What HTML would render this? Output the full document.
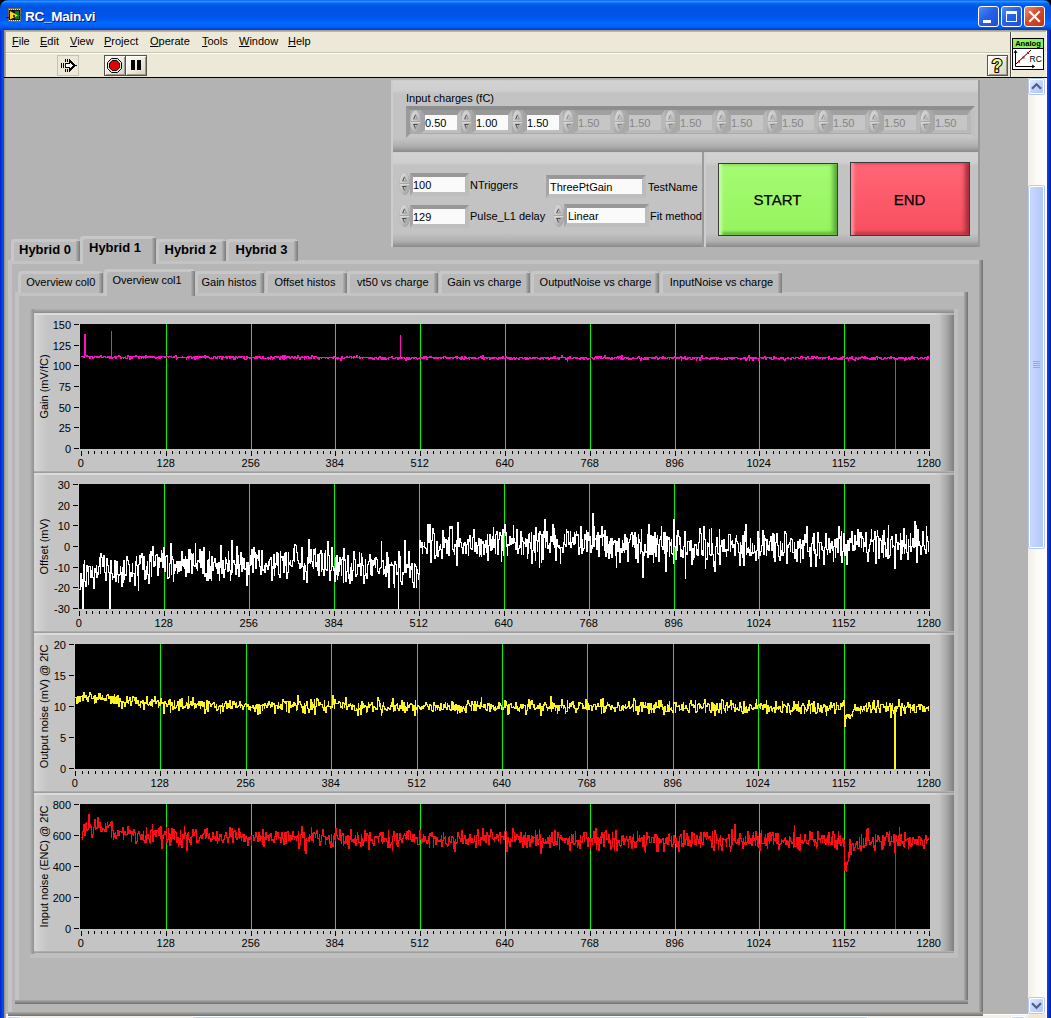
<!DOCTYPE html>
<html><head><meta charset="utf-8"><title>RC_Main.vi</title>
<style>
html,body{margin:0;padding:0;}
body{width:1051px;height:1018px;overflow:hidden;position:relative;background:#b3b3b3;font-family:"Liberation Sans",sans-serif;font-size:11px;color:#000;}
div,span{position:absolute;box-sizing:border-box;white-space:nowrap;}
svg{position:absolute;overflow:visible;}
.t{line-height:13px;height:13px;}
.titlebar{left:0;top:0;width:1051px;height:30px;border-radius:8px 8px 0 0;
 background:linear-gradient(to bottom,#0058ee 0%,#3593ff 4%,#288eff 6%,#127dff 8%,#036ffc 10%,#0262ee 14%,#0057e5 20%,#0054e3 24%,#0055eb 56%,#005bf5 66%,#026afe 76%,#0061fc 86%,#0055ea 92%,#0044cf 96%,#003dd7 100%);}
.title{left:25px;top:9px;font-size:13.5px;letter-spacing:-0.25px;font-weight:bold;color:#fff;text-shadow:1px 1px 0 #0a1883;line-height:16px;height:16px;}
.bl{left:0;top:30px;width:4px;height:988px;background:linear-gradient(to right,#0022c8 0%,#0838e0 40%,#0c4cf0 75%,#0840e0 100%);}
.br{left:1047px;top:30px;width:4px;height:988px;background:linear-gradient(to right,#0a44ea 0%,#0538dc 45%,#0020a8 80%,#001590 100%);}
.menubg{left:4px;top:30px;width:1043px;height:48px;background:#ece9d8;}
.mi{top:35px;font-size:11px;line-height:13px;height:13px;}
.mi u{text-decoration:underline;text-decoration-thickness:1px;text-underline-offset:1px;}
.cb{top:6px;width:21px;height:21px;border-radius:3px;border:1px solid #fff;}
.cluster{background:linear-gradient(to bottom,#c6c6c6 0px,#d2d2d2 1px,#cfcfcf 10px,#c3c3c3 14px,#c3c3c3 calc(100% - 14px),#b0b0b0 calc(100% - 6px),#8a8a8a 100%);border-left:2px solid #cdcdcd;border-right:2px solid #9a9a9a;}
.fld{border-style:solid;border-width:4px 4px 4px 3px;border-color:#989898 #bcbcbc #bebebe #a4a4a4;background:#fafafa;}
.fld.dis{background:#c6c6c6;border-color:#a0a0a0 #b8b8b8 #bababa #a8a8a8;}
.fld.arr{border-width:5px 4px 3px 4px;}
.fld.num span{left:0px;}
.fld span{left:1px;top:2px;line-height:13px;}
.fld.dis span{color:#858585;}
.tab{background:#bababa;border-radius:3px 4px 0 0;box-shadow:inset 3px 3px 0 #c7c7c7;overflow:hidden;}
.tab i{position:absolute;display:block;right:0;top:2px;width:4px;height:100%;background:linear-gradient(to right,#b0b0b0,#7a7a7a);}
.tab.sel{background:#b6b6b6;}
.tab.big{font-size:13px;font-weight:bold;}
.page{background:#b6b6b6;box-shadow:inset 4px 4px 0 #c3c3c3;}
.page i{position:absolute;display:block;}
.page .r{right:0;top:0;width:4px;height:100%;background:linear-gradient(to right,#aaaaaa,#707070);}
.page .b{left:0;bottom:0;height:4px;width:100%;background:linear-gradient(to bottom,#aaaaaa,#707070);}
.chart{background:linear-gradient(to right,#d6d6d6 0,#cbcbcb 8px,#c4c4c4 14px,#c4c4c4 905px,#a6a6a6 913px,#7e7e7e 920px);}
.lbl{font-size:11px;line-height:13px;height:13px;margin-top:1px;}
</style></head>
<body>
<svg width="0" height="0" style="left:0;top:0"><defs><linearGradient id="spg" x1="0" y1="0" x2="1" y2="1"><stop offset="0" stop-color="#dcdcdc"/><stop offset="0.45" stop-color="#c9c9c9"/><stop offset="1" stop-color="#989898"/></linearGradient></defs></svg>
<div style="left:0;top:0;width:1051px;height:12px;background:#000"></div>
<div class="titlebar"></div>
<div class="bl"></div><div class="br"></div>
<svg style="left:5px;top:8px" width="18" height="14" viewBox="0 0 18 14" shape-rendering="crispEdges">
<rect x="3" y="0" width="13" height="14" fill="#6e6a5a"/>
<rect x="4" y="2" width="11" height="10" fill="#101010"/>
<g fill="#e8e8e8"><rect x="4" y="0.6" width="1" height="1"/><rect x="6" y="0.6" width="1" height="1"/><rect x="8" y="0.6" width="1" height="1"/><rect x="10" y="0.6" width="1" height="1"/><rect x="12" y="0.6" width="1" height="1"/><rect x="14" y="0.6" width="1" height="1"/>
<rect x="4" y="12.4" width="1" height="1"/><rect x="6" y="12.4" width="1" height="1"/><rect x="8" y="12.4" width="1" height="1"/><rect x="10" y="12.4" width="1" height="1"/><rect x="12" y="12.4" width="1" height="1"/><rect x="14" y="12.4" width="1" height="1"/></g>
<rect x="10" y="3" width="4" height="8" fill="#0a7a14"/>
<polygon points="5,3 5,11.5 13,7.5" fill="#ffd21e" shape-rendering="auto"/>
<rect x="7.5" y="6.5" width="2" height="2" fill="#333"/>
<rect x="1" y="5" width="4" height="1" fill="#f00"/><rect x="1" y="9" width="4" height="1" fill="#00f"/><rect x="13" y="7" width="4" height="1" fill="#f00"/>
</svg>
<div class="title">RC_Main.vi</div>
<div class="cb" style="left:978px;background:linear-gradient(135deg,#4f8df6 0%,#2761e8 45%,#1e4fd8 100%)"><div style="left:4px;top:13px;width:8px;height:3px;background:#fff"></div></div>
<div class="cb" style="left:1001px;background:linear-gradient(135deg,#4f8df6 0%,#2761e8 45%,#1e4fd8 100%)"><div style="left:4px;top:4px;width:11px;height:11px;border:1px solid #fff;border-top:3px solid #fff"></div></div>
<div class="cb" style="left:1024px;background:linear-gradient(135deg,#e9907a 0%,#d5492a 45%,#c13515 100%)"><svg style="left:3px;top:3px" width="13" height="13" viewBox="0 0 13 13"><path d="M2 2 L11 11 M11 2 L2 11" stroke="#fff" stroke-width="2.2" stroke-linecap="square"/></svg></div>
<div class="menubg"></div>
<div style="left:4px;top:30px;width:1043px;height:2px;background:linear-gradient(to bottom,#9c9782,#c4c0ae)"></div>
<div style="left:4px;top:30px;width:2px;height:988px;background:linear-gradient(to right,#8f8a76,#b9b5a3)"></div>
<div style="left:1046px;top:31px;width:1px;height:987px;background:#fff"></div>
<div style="left:6px;top:52px;width:1005px;height:1px;background:#c9c6b6"></div>
<div style="left:6px;top:53px;width:1005px;height:1px;background:#fff"></div>
<div style="left:4px;top:77px;width:1043px;height:1px;background:#000"></div>
<div style="left:1010px;top:32px;width:1px;height:45px;background:#4a4a44"></div>
<div style="left:1011px;top:32px;width:1px;height:45px;background:#fff"></div>
<div class="mi" style="left:12px"><u>F</u>ile</div>
<div class="mi" style="left:40px"><u>E</u>dit</div>
<div class="mi" style="left:70px"><u>V</u>iew</div>
<div class="mi" style="left:104px"><u>P</u>roject</div>
<div class="mi" style="left:150px"><u>O</u>perate</div>
<div class="mi" style="left:202px"><u>T</u>ools</div>
<div class="mi" style="left:239px"><u>W</u>indow</div>
<div class="mi" style="left:288px"><u>H</u>elp</div>
<div style="left:57px;top:55px;width:22px;height:21px;background:#ebe8d7;border:1px solid #c6c3b2"></div>
<svg style="left:0;top:0" width="90" height="80" viewBox="0 0 90 80" shape-rendering="crispEdges"><g fill="#000"><rect x="61" y="63" width="1" height="5"/><rect x="63" y="63" width="1" height="5"/><rect x="65" y="59" width="1" height="3"/><rect x="67" y="59" width="1" height="3"/><rect x="65" y="69" width="1" height="3"/><rect x="67" y="69" width="1" height="3"/><rect x="65" y="63" width="5" height="1"/><rect x="65" y="67" width="5" height="1"/><rect x="65" y="63" width="1" height="5"/><rect x="69" y="59" width="1" height="13"/><rect x="70" y="60" width="1" height="11"/><rect x="71" y="61" width="1" height="9"/><rect x="72" y="62" width="1" height="7"/><rect x="73" y="63" width="1" height="5"/><rect x="74" y="64" width="1" height="3"/><rect x="75" y="65" width="1" height="1"/><rect x="76" y="65" width="1" height="1"/></g><g fill="#fff"><rect x="66" y="64" width="5" height="3"/><rect x="70" y="63" width="1" height="5"/><rect x="71" y="64" width="1" height="3"/><rect x="72" y="65" width="1" height="1"/></g></svg>
<div style="left:104px;top:55px;width:22px;height:21px;background:linear-gradient(135deg,#fffef6 0%,#efecdc 50%,#d4d1bf 100%);border:1px solid;border-color:#55534a #55534a #55534a #55534a;box-shadow:inset 1px 1px 0 #fff,inset -1px -1px 0 #9d9a89"></div>
<div style="left:125px;top:55px;width:22px;height:21px;background:linear-gradient(135deg,#fffef6 0%,#efecdc 50%,#d4d1bf 100%);border:1px solid;border-color:#55534a #55534a #55534a #55534a;box-shadow:inset 1px 1px 0 #fff,inset -1px -1px 0 #9d9a89"></div>
<svg style="left:107px;top:58px" width="15" height="15" viewBox="0 0 15 15">
<polygon points="4.5,0.5 10.5,0.5 14.5,4.5 14.5,10.5 10.5,14.5 4.5,14.5 0.5,10.5 0.5,4.5" fill="#e4e4e4" stroke="#000" stroke-width="1"/>
<polygon points="5.3,2.5 9.7,2.5 12.5,5.3 12.5,9.7 9.7,12.5 5.3,12.5 2.5,9.7 2.5,5.3" fill="#e20000" stroke="#000" stroke-width="1"/>
</svg>
<div style="left:131px;top:60px;width:4px;height:10px;background:#000"></div><div style="left:137px;top:60px;width:4px;height:10px;background:#000"></div>
<div style="left:987px;top:55px;width:21px;height:21px;background:linear-gradient(135deg,#fffef6 0%,#efecdc 50%,#d4d1bf 100%);border:1px solid #55534a;box-shadow:inset 1px 1px 0 #fff,inset -1px -1px 0 #9d9a89"></div>
<svg style="left:987px;top:55px" width="21" height="21" viewBox="0 0 21 21"><text x="10.2" y="16.8" text-anchor="middle" font-family="Liberation Sans, sans-serif" font-size="17.5" font-weight="bold" fill="#f7f784" stroke="#000" stroke-width="2.2" stroke-linejoin="round" paint-order="stroke fill">?</text></svg>
<svg style="left:1012px;top:38px" width="32" height="32" viewBox="0 0 32 32">
<rect x="0.5" y="0.5" width="31" height="31" fill="#fff" stroke="#000"/>
<rect x="1" y="1" width="30" height="9" fill="#8cf05a"/>
<rect x="0" y="10" width="32" height="1" fill="#000"/>
<text x="16" y="8.2" font-family="Liberation Sans, sans-serif" font-size="7.6" font-weight="bold" text-anchor="middle" fill="#000">Analog</text>
<path d="M3.5 13 V28.5 H22" stroke="#000" fill="none"/>
<path d="M2 15 L3.5 12.5 L5 15 M20 27 L22.5 28.5 L20 30" stroke="#000" fill="none"/>
<path d="M4 26 L19 12" stroke="#000"/>
<rect x="6" y="22.5" width="2" height="2" fill="#f00"/><rect x="10.5" y="18.5" width="2" height="2" fill="#f00"/><rect x="15" y="14" width="2" height="2" fill="#f00"/>
<text x="17.5" y="24" font-family="Liberation Sans, sans-serif" font-size="8.5" fill="#000">RC</text>
</svg>
<div style="left:1028px;top:78px;width:18px;height:936px;background:linear-gradient(to right,#f1efe8 0,#fbfaf6 50%,#fefefb 100%)"></div>
<div style="left:1029px;top:79px;width:15px;height:15px;border-radius:2px;background:linear-gradient(135deg,#e1eafe 0%,#c3d3fd 50%,#aec4fb 100%);border:1px solid #fff;box-shadow:0 0 0 1px #b4c8f6"></div>
<svg style="left:1032px;top:83px" width="9" height="7" viewBox="0 0 8 6"><polyline points="0,5 4,1 8,5" fill="none" stroke="#4d6185" stroke-width="2"/></svg>
<div style="left:1029px;top:998px;width:15px;height:15px;border-radius:2px;background:linear-gradient(135deg,#e1eafe 0%,#c3d3fd 50%,#aec4fb 100%);border:1px solid #fff;box-shadow:0 0 0 1px #b4c8f6"></div>
<svg style="left:1032px;top:1002px" width="9" height="7" viewBox="0 0 8 6"><polyline points="0,1 4,5 8,1" fill="none" stroke="#4d6185" stroke-width="2"/></svg>
<div style="left:1029px;top:186px;width:15px;height:362px;border-radius:2px;background:linear-gradient(to right,#c9d7fd 0%,#c1d2fc 40%,#b3c6fa 100%);border:1px solid #fff;box-shadow:0 0 0 1px #b4c8f6"></div>
<div style="left:1033px;top:361px;width:7px;height:1px;background:#8fa8ee"></div>
<div style="left:1033px;top:363px;width:7px;height:1px;background:#8fa8ee"></div>
<div style="left:1033px;top:365px;width:7px;height:1px;background:#8fa8ee"></div>
<div style="left:1033px;top:367px;width:7px;height:1px;background:#8fa8ee"></div>
<div style="left:6px;top:1014px;width:1022px;height:4px;background:#f3f1ec;border-top:1px solid #fefefe"></div>
<div style="left:7px;top:1016px;width:14px;height:4px;background:#c3d3fd;border:1px solid #fff;border-radius:2px 2px 0 0"></div>
<div style="left:1011px;top:1016px;width:14px;height:4px;background:#c3d3fd;border:1px solid #fff;border-radius:2px 2px 0 0"></div>
<div style="left:192px;top:1016px;width:676px;height:4px;background:#c1d2fc;border:1px solid #fff;border-radius:2px 2px 0 0"></div>
<div style="left:1028px;top:1014px;width:18px;height:4px;background:#ece9d8"></div>
<div class="cluster" style="left:391px;top:80px;width:589px;height:72px"></div>
<div class="lbl" style="left:406px;top:91px">Input charges (fC)</div>
<div style="left:406px;top:106px;width:569px;height:32px;border-style:solid;border-width:4px;border-color:#8e8e8e #c0c0c0 #c6c6c6 #9a9a9a;background:#ababab"></div>
<svg style="left:410px;top:110px" width="11" height="23" viewBox="0 0 11 23">
<ellipse cx="5.9" cy="11.9" rx="5.2" ry="11.2" fill="#9a9a9a"/><ellipse cx="5.4" cy="11.4" rx="5.1" ry="11.1" fill="url(#spg)" stroke="#b4b4b4" stroke-width="0.6"/>
<rect x="0.8" y="11" width="9.4" height="1" fill="#a6a6a6"/><rect x="0.8" y="12" width="9.4" height="1" fill="#d8d8d8"/>
<g><path d="M3.6 9.2 L5.6 4.8" stroke="#3a3a3a" stroke-width="1" fill="none"/><path d="M5.6 4.8 L7.4 9 H3.6" stroke="#8c8c8c" stroke-width="0.8" fill="none"/>
<path d="M3.4 14.5 H7.6" stroke="#4a4a4a" stroke-width="1" fill="none"/><path d="M3.8 14.5 L5.6 18.6" stroke="#4a4a4a" stroke-width="1" fill="none"/><path d="M7.4 14.5 L5.6 18.6" stroke="#9a9a9a" stroke-width="0.8" fill="none"/></g>
</svg>
<div class="fld arr num" style="left:421px;top:110px;width:40px;height:23px"><span>0.50</span></div>
<svg style="left:461px;top:110px" width="11" height="23" viewBox="0 0 11 23">
<ellipse cx="5.9" cy="11.9" rx="5.2" ry="11.2" fill="#9a9a9a"/><ellipse cx="5.4" cy="11.4" rx="5.1" ry="11.1" fill="url(#spg)" stroke="#b4b4b4" stroke-width="0.6"/>
<rect x="0.8" y="11" width="9.4" height="1" fill="#a6a6a6"/><rect x="0.8" y="12" width="9.4" height="1" fill="#d8d8d8"/>
<g><path d="M3.6 9.2 L5.6 4.8" stroke="#3a3a3a" stroke-width="1" fill="none"/><path d="M5.6 4.8 L7.4 9 H3.6" stroke="#8c8c8c" stroke-width="0.8" fill="none"/>
<path d="M3.4 14.5 H7.6" stroke="#4a4a4a" stroke-width="1" fill="none"/><path d="M3.8 14.5 L5.6 18.6" stroke="#4a4a4a" stroke-width="1" fill="none"/><path d="M7.4 14.5 L5.6 18.6" stroke="#9a9a9a" stroke-width="0.8" fill="none"/></g>
</svg>
<div class="fld arr num" style="left:472px;top:110px;width:40px;height:23px"><span>1.00</span></div>
<svg style="left:512px;top:110px" width="11" height="23" viewBox="0 0 11 23">
<ellipse cx="5.9" cy="11.9" rx="5.2" ry="11.2" fill="#9a9a9a"/><ellipse cx="5.4" cy="11.4" rx="5.1" ry="11.1" fill="url(#spg)" stroke="#b4b4b4" stroke-width="0.6"/>
<rect x="0.8" y="11" width="9.4" height="1" fill="#a6a6a6"/><rect x="0.8" y="12" width="9.4" height="1" fill="#d8d8d8"/>
<g><path d="M3.6 9.2 L5.6 4.8" stroke="#3a3a3a" stroke-width="1" fill="none"/><path d="M5.6 4.8 L7.4 9 H3.6" stroke="#8c8c8c" stroke-width="0.8" fill="none"/>
<path d="M3.4 14.5 H7.6" stroke="#4a4a4a" stroke-width="1" fill="none"/><path d="M3.8 14.5 L5.6 18.6" stroke="#4a4a4a" stroke-width="1" fill="none"/><path d="M7.4 14.5 L5.6 18.6" stroke="#9a9a9a" stroke-width="0.8" fill="none"/></g>
</svg>
<div class="fld arr num" style="left:523px;top:110px;width:40px;height:23px"><span>1.50</span></div>
<svg style="left:563px;top:110px" width="11" height="23" viewBox="0 0 11 23">
<ellipse cx="5.9" cy="11.9" rx="5.2" ry="11.2" fill="#9a9a9a"/><ellipse cx="5.4" cy="11.4" rx="5.1" ry="11.1" fill="url(#spg)" stroke="#b4b4b4" stroke-width="0.6"/>
<rect x="0.8" y="11" width="9.4" height="1" fill="#a6a6a6"/><rect x="0.8" y="12" width="9.4" height="1" fill="#d8d8d8"/>
<g opacity="0.5"><path d="M3.6 9.2 L5.6 4.8" stroke="#3a3a3a" stroke-width="1" fill="none"/><path d="M5.6 4.8 L7.4 9 H3.6" stroke="#8c8c8c" stroke-width="0.8" fill="none"/>
<path d="M3.4 14.5 H7.6" stroke="#4a4a4a" stroke-width="1" fill="none"/><path d="M3.8 14.5 L5.6 18.6" stroke="#4a4a4a" stroke-width="1" fill="none"/><path d="M7.4 14.5 L5.6 18.6" stroke="#9a9a9a" stroke-width="0.8" fill="none"/></g>
</svg>
<div class="fld dis arr num" style="left:574px;top:110px;width:40px;height:23px"><span>1.50</span></div>
<svg style="left:614px;top:110px" width="11" height="23" viewBox="0 0 11 23">
<ellipse cx="5.9" cy="11.9" rx="5.2" ry="11.2" fill="#9a9a9a"/><ellipse cx="5.4" cy="11.4" rx="5.1" ry="11.1" fill="url(#spg)" stroke="#b4b4b4" stroke-width="0.6"/>
<rect x="0.8" y="11" width="9.4" height="1" fill="#a6a6a6"/><rect x="0.8" y="12" width="9.4" height="1" fill="#d8d8d8"/>
<g opacity="0.5"><path d="M3.6 9.2 L5.6 4.8" stroke="#3a3a3a" stroke-width="1" fill="none"/><path d="M5.6 4.8 L7.4 9 H3.6" stroke="#8c8c8c" stroke-width="0.8" fill="none"/>
<path d="M3.4 14.5 H7.6" stroke="#4a4a4a" stroke-width="1" fill="none"/><path d="M3.8 14.5 L5.6 18.6" stroke="#4a4a4a" stroke-width="1" fill="none"/><path d="M7.4 14.5 L5.6 18.6" stroke="#9a9a9a" stroke-width="0.8" fill="none"/></g>
</svg>
<div class="fld dis arr num" style="left:625px;top:110px;width:40px;height:23px"><span>1.50</span></div>
<svg style="left:665px;top:110px" width="11" height="23" viewBox="0 0 11 23">
<ellipse cx="5.9" cy="11.9" rx="5.2" ry="11.2" fill="#9a9a9a"/><ellipse cx="5.4" cy="11.4" rx="5.1" ry="11.1" fill="url(#spg)" stroke="#b4b4b4" stroke-width="0.6"/>
<rect x="0.8" y="11" width="9.4" height="1" fill="#a6a6a6"/><rect x="0.8" y="12" width="9.4" height="1" fill="#d8d8d8"/>
<g opacity="0.5"><path d="M3.6 9.2 L5.6 4.8" stroke="#3a3a3a" stroke-width="1" fill="none"/><path d="M5.6 4.8 L7.4 9 H3.6" stroke="#8c8c8c" stroke-width="0.8" fill="none"/>
<path d="M3.4 14.5 H7.6" stroke="#4a4a4a" stroke-width="1" fill="none"/><path d="M3.8 14.5 L5.6 18.6" stroke="#4a4a4a" stroke-width="1" fill="none"/><path d="M7.4 14.5 L5.6 18.6" stroke="#9a9a9a" stroke-width="0.8" fill="none"/></g>
</svg>
<div class="fld dis arr num" style="left:676px;top:110px;width:40px;height:23px"><span>1.50</span></div>
<svg style="left:716px;top:110px" width="11" height="23" viewBox="0 0 11 23">
<ellipse cx="5.9" cy="11.9" rx="5.2" ry="11.2" fill="#9a9a9a"/><ellipse cx="5.4" cy="11.4" rx="5.1" ry="11.1" fill="url(#spg)" stroke="#b4b4b4" stroke-width="0.6"/>
<rect x="0.8" y="11" width="9.4" height="1" fill="#a6a6a6"/><rect x="0.8" y="12" width="9.4" height="1" fill="#d8d8d8"/>
<g opacity="0.5"><path d="M3.6 9.2 L5.6 4.8" stroke="#3a3a3a" stroke-width="1" fill="none"/><path d="M5.6 4.8 L7.4 9 H3.6" stroke="#8c8c8c" stroke-width="0.8" fill="none"/>
<path d="M3.4 14.5 H7.6" stroke="#4a4a4a" stroke-width="1" fill="none"/><path d="M3.8 14.5 L5.6 18.6" stroke="#4a4a4a" stroke-width="1" fill="none"/><path d="M7.4 14.5 L5.6 18.6" stroke="#9a9a9a" stroke-width="0.8" fill="none"/></g>
</svg>
<div class="fld dis arr num" style="left:727px;top:110px;width:40px;height:23px"><span>1.50</span></div>
<svg style="left:767px;top:110px" width="11" height="23" viewBox="0 0 11 23">
<ellipse cx="5.9" cy="11.9" rx="5.2" ry="11.2" fill="#9a9a9a"/><ellipse cx="5.4" cy="11.4" rx="5.1" ry="11.1" fill="url(#spg)" stroke="#b4b4b4" stroke-width="0.6"/>
<rect x="0.8" y="11" width="9.4" height="1" fill="#a6a6a6"/><rect x="0.8" y="12" width="9.4" height="1" fill="#d8d8d8"/>
<g opacity="0.5"><path d="M3.6 9.2 L5.6 4.8" stroke="#3a3a3a" stroke-width="1" fill="none"/><path d="M5.6 4.8 L7.4 9 H3.6" stroke="#8c8c8c" stroke-width="0.8" fill="none"/>
<path d="M3.4 14.5 H7.6" stroke="#4a4a4a" stroke-width="1" fill="none"/><path d="M3.8 14.5 L5.6 18.6" stroke="#4a4a4a" stroke-width="1" fill="none"/><path d="M7.4 14.5 L5.6 18.6" stroke="#9a9a9a" stroke-width="0.8" fill="none"/></g>
</svg>
<div class="fld dis arr num" style="left:778px;top:110px;width:40px;height:23px"><span>1.50</span></div>
<svg style="left:818px;top:110px" width="11" height="23" viewBox="0 0 11 23">
<ellipse cx="5.9" cy="11.9" rx="5.2" ry="11.2" fill="#9a9a9a"/><ellipse cx="5.4" cy="11.4" rx="5.1" ry="11.1" fill="url(#spg)" stroke="#b4b4b4" stroke-width="0.6"/>
<rect x="0.8" y="11" width="9.4" height="1" fill="#a6a6a6"/><rect x="0.8" y="12" width="9.4" height="1" fill="#d8d8d8"/>
<g opacity="0.5"><path d="M3.6 9.2 L5.6 4.8" stroke="#3a3a3a" stroke-width="1" fill="none"/><path d="M5.6 4.8 L7.4 9 H3.6" stroke="#8c8c8c" stroke-width="0.8" fill="none"/>
<path d="M3.4 14.5 H7.6" stroke="#4a4a4a" stroke-width="1" fill="none"/><path d="M3.8 14.5 L5.6 18.6" stroke="#4a4a4a" stroke-width="1" fill="none"/><path d="M7.4 14.5 L5.6 18.6" stroke="#9a9a9a" stroke-width="0.8" fill="none"/></g>
</svg>
<div class="fld dis arr num" style="left:829px;top:110px;width:40px;height:23px"><span>1.50</span></div>
<svg style="left:869px;top:110px" width="11" height="23" viewBox="0 0 11 23">
<ellipse cx="5.9" cy="11.9" rx="5.2" ry="11.2" fill="#9a9a9a"/><ellipse cx="5.4" cy="11.4" rx="5.1" ry="11.1" fill="url(#spg)" stroke="#b4b4b4" stroke-width="0.6"/>
<rect x="0.8" y="11" width="9.4" height="1" fill="#a6a6a6"/><rect x="0.8" y="12" width="9.4" height="1" fill="#d8d8d8"/>
<g opacity="0.5"><path d="M3.6 9.2 L5.6 4.8" stroke="#3a3a3a" stroke-width="1" fill="none"/><path d="M5.6 4.8 L7.4 9 H3.6" stroke="#8c8c8c" stroke-width="0.8" fill="none"/>
<path d="M3.4 14.5 H7.6" stroke="#4a4a4a" stroke-width="1" fill="none"/><path d="M3.8 14.5 L5.6 18.6" stroke="#4a4a4a" stroke-width="1" fill="none"/><path d="M7.4 14.5 L5.6 18.6" stroke="#9a9a9a" stroke-width="0.8" fill="none"/></g>
</svg>
<div class="fld dis arr num" style="left:880px;top:110px;width:40px;height:23px"><span>1.50</span></div>
<svg style="left:920px;top:110px" width="11" height="23" viewBox="0 0 11 23">
<ellipse cx="5.9" cy="11.9" rx="5.2" ry="11.2" fill="#9a9a9a"/><ellipse cx="5.4" cy="11.4" rx="5.1" ry="11.1" fill="url(#spg)" stroke="#b4b4b4" stroke-width="0.6"/>
<rect x="0.8" y="11" width="9.4" height="1" fill="#a6a6a6"/><rect x="0.8" y="12" width="9.4" height="1" fill="#d8d8d8"/>
<g opacity="0.5"><path d="M3.6 9.2 L5.6 4.8" stroke="#3a3a3a" stroke-width="1" fill="none"/><path d="M5.6 4.8 L7.4 9 H3.6" stroke="#8c8c8c" stroke-width="0.8" fill="none"/>
<path d="M3.4 14.5 H7.6" stroke="#4a4a4a" stroke-width="1" fill="none"/><path d="M3.8 14.5 L5.6 18.6" stroke="#4a4a4a" stroke-width="1" fill="none"/><path d="M7.4 14.5 L5.6 18.6" stroke="#9a9a9a" stroke-width="0.8" fill="none"/></g>
</svg>
<div class="fld dis arr num" style="left:931px;top:110px;width:40px;height:23px"><span>1.50</span></div>
<div class="cluster" style="left:391px;top:152px;width:313px;height:95px"></div>
<svg style="left:399px;top:172px" width="11" height="23" viewBox="0 0 11 23">
<ellipse cx="5.9" cy="11.9" rx="5.2" ry="11.2" fill="#9a9a9a"/><ellipse cx="5.4" cy="11.4" rx="5.1" ry="11.1" fill="url(#spg)" stroke="#b4b4b4" stroke-width="0.6"/>
<rect x="0.8" y="11" width="9.4" height="1" fill="#a6a6a6"/><rect x="0.8" y="12" width="9.4" height="1" fill="#d8d8d8"/>
<g><path d="M3.6 9.2 L5.6 4.8" stroke="#3a3a3a" stroke-width="1" fill="none"/><path d="M5.6 4.8 L7.4 9 H3.6" stroke="#8c8c8c" stroke-width="0.8" fill="none"/>
<path d="M3.4 14.5 H7.6" stroke="#4a4a4a" stroke-width="1" fill="none"/><path d="M3.8 14.5 L5.6 18.6" stroke="#4a4a4a" stroke-width="1" fill="none"/><path d="M7.4 14.5 L5.6 18.6" stroke="#9a9a9a" stroke-width="0.8" fill="none"/></g>
</svg>
<div class="fld num" style="left:410px;top:173px;width:59px;height:23px"><span>100</span></div>
<div class="lbl" style="left:470px;top:178px">NTriggers</div>
<svg style="left:399px;top:204px" width="11" height="23" viewBox="0 0 11 23">
<ellipse cx="5.9" cy="11.9" rx="5.2" ry="11.2" fill="#9a9a9a"/><ellipse cx="5.4" cy="11.4" rx="5.1" ry="11.1" fill="url(#spg)" stroke="#b4b4b4" stroke-width="0.6"/>
<rect x="0.8" y="11" width="9.4" height="1" fill="#a6a6a6"/><rect x="0.8" y="12" width="9.4" height="1" fill="#d8d8d8"/>
<g><path d="M3.6 9.2 L5.6 4.8" stroke="#3a3a3a" stroke-width="1" fill="none"/><path d="M5.6 4.8 L7.4 9 H3.6" stroke="#8c8c8c" stroke-width="0.8" fill="none"/>
<path d="M3.4 14.5 H7.6" stroke="#4a4a4a" stroke-width="1" fill="none"/><path d="M3.8 14.5 L5.6 18.6" stroke="#4a4a4a" stroke-width="1" fill="none"/><path d="M7.4 14.5 L5.6 18.6" stroke="#9a9a9a" stroke-width="0.8" fill="none"/></g>
</svg>
<div class="fld num" style="left:410px;top:205px;width:59px;height:23px"><span>129</span></div>
<div class="lbl" style="left:470px;top:209px">Pulse_L1 delay</div>
<div class="fld" style="left:546px;top:175px;width:100px;height:23px"><span>ThreePtGain</span></div>
<div class="lbl" style="left:648px;top:180px">TestName</div>
<svg style="left:553px;top:204px" width="11" height="23" viewBox="0 0 11 23">
<ellipse cx="5.9" cy="11.9" rx="5.2" ry="11.2" fill="#9a9a9a"/><ellipse cx="5.4" cy="11.4" rx="5.1" ry="11.1" fill="url(#spg)" stroke="#b4b4b4" stroke-width="0.6"/>
<rect x="0.8" y="11" width="9.4" height="1" fill="#a6a6a6"/><rect x="0.8" y="12" width="9.4" height="1" fill="#d8d8d8"/>
<g><path d="M3.6 9.2 L5.6 4.8" stroke="#3a3a3a" stroke-width="1" fill="none"/><path d="M5.6 4.8 L7.4 9 H3.6" stroke="#8c8c8c" stroke-width="0.8" fill="none"/>
<path d="M3.4 14.5 H7.6" stroke="#4a4a4a" stroke-width="1" fill="none"/><path d="M3.8 14.5 L5.6 18.6" stroke="#4a4a4a" stroke-width="1" fill="none"/><path d="M7.4 14.5 L5.6 18.6" stroke="#9a9a9a" stroke-width="0.8" fill="none"/></g>
</svg>
<div class="fld" style="left:564px;top:204px;width:85px;height:23px"><span>Linear</span></div>
<div class="lbl" style="left:650px;top:209px">Fit method</div>
<div class="cluster" style="left:704px;top:152px;width:276px;height:95px"></div>
<div style="left:718px;top:163px;width:120px;height:73px;background:linear-gradient(to bottom,#a4fb72,#96f45e);border:1px solid #3a3a3a;box-shadow:inset 4px 0 3px -1px #c2ffa2,inset -5px 0 4px -1px #5aa83a,inset 0 -4px 3px -1px #64b842,inset 0 2px 2px -1px #92e464;font-size:15px;line-height:71px;text-align:center"><span style="position:static;margin-left:-1px;-webkit-text-stroke:0.25px #000">START</span></div>
<div style="left:850px;top:162px;width:120px;height:74px;background:linear-gradient(to bottom,#ff6676,#f84e5e);border:1px solid #3a3a3a;box-shadow:inset 4px 0 3px -1px #ff8e9a,inset -5px 0 4px -1px #a62e3e,inset 0 -4px 3px -1px #be3a48,inset 0 2px 2px -1px #e45262;font-size:15px;line-height:74px;text-align:center"><span style="position:static;margin-left:-1px;-webkit-text-stroke:0.25px #000">END</span></div>
<div class="page" style="left:8px;top:260px;width:975px;height:756px"><i class="r"></i><i class="b"></i></div>
<div class="tab big" style="left:11px;top:239px;width:69px;height:22px"><i class="r"></i><span style="left:8px;top:3.0px;line-height:16px">Hybrid 0</span></div>
<div class="tab big" style="left:156px;top:239px;width:70px;height:22px"><i class="r"></i><span style="left:8.5px;top:3.0px;line-height:16px">Hybrid 2</span></div>
<div class="tab big" style="left:226px;top:239px;width:72px;height:22px"><i class="r"></i><span style="left:9.5px;top:3.0px;line-height:16px">Hybrid 3</span></div>
<div class="tab big sel" style="left:80px;top:236px;width:76px;height:28px"><i class="r"></i><span style="left:9px;top:3.8px;line-height:16px">Hybrid 1</span></div>
<div class="page" style="left:15px;top:292px;width:953px;height:712px"><i class="r"></i><i class="b"></i></div>
<div class="tab" style="left:18px;top:271px;width:85px;height:22px"><i class="r"></i><span style="left:8.3px;top:4.7px;line-height:13px">Overview col0</span></div>
<div class="tab" style="left:195px;top:271px;width:69px;height:22px"><i class="r"></i><span style="left:6.5px;top:4.7px;line-height:13px">Gain histos</span></div>
<div class="tab" style="left:265px;top:271px;width:82px;height:22px"><i class="r"></i><span style="left:9.5px;top:4.7px;line-height:13px">Offset histos</span></div>
<div class="tab" style="left:347px;top:271px;width:91px;height:22px"><i class="r"></i><span style="left:10px;top:4.7px;line-height:13px">vt50 vs charge</span></div>
<div class="tab" style="left:439px;top:271px;width:91px;height:22px"><i class="r"></i><span style="left:8.300000000000011px;top:4.7px;line-height:13px">Gain vs charge</span></div>
<div class="tab" style="left:531px;top:271px;width:128px;height:22px"><i class="r"></i><span style="left:8.600000000000023px;top:4.7px;line-height:13px">OutputNoise vs charge</span></div>
<div class="tab" style="left:660px;top:271px;width:122px;height:22px"><i class="r"></i><span style="left:9.799999999999955px;top:4.7px;line-height:13px">InputNoise vs charge</span></div>
<div class="tab sel" style="left:104px;top:269px;width:91px;height:27px"><i class="r"></i><span style="left:8.5px;top:4.9px;line-height:13px">Overview col1</span></div>
<div style="left:30px;top:309px;width:928px;height:649px;background:#bfbfbf"></div>
<div style="left:30px;top:309px;width:924px;height:4px;background:linear-gradient(to bottom,#b2b2b2,#8a8a8a)"></div>
<div style="left:30px;top:309px;width:4px;height:645px;background:linear-gradient(to right,#b2b2b2,#909090)"></div>
<div class="chart" style="left:34px;top:313px;width:920px;height:160px"></div>
<div style="left:34px;top:313px;width:920px;height:2px;background:linear-gradient(to right,#dcdcdc 0,#d8d8d8 900px,#b0b0b0 920px)"></div>
<div style="left:34px;top:471px;width:920px;height:2px;background:linear-gradient(to bottom,#b4b4b4,#969696)"></div>
<svg style="left:0;top:0" width="1051" height="1018" viewBox="0 0 1051 1018" shape-rendering="crispEdges" font-family="Liberation Sans, sans-serif" font-size="11">
<rect x="80" y="324" width="850" height="125" fill="#000"/>
<path d="M166.5 324V449M251.5 324V449M335.5 324V449M420.5 324V449M505.5 324V449M590.5 324V449M675.5 324V449M759.5 324V449M844.5 324V449" stroke="#08f408" stroke-width="1" fill="none"/>
<path d="M81.5 356.5H82.5V356.5H82.5V356.5H83.5V357.5H84.5V357.5H84.5V334.5H85.5V355.5H86.5V356.5H86.5V355.5H87.5V356.5H88.5V356.5H88.5V356.5H89.5V358.5H90.5V356.5H90.5V356.5H91.5V356.5H92.5V358.5H92.5V358.5H93.5V357.5H93.5V357.5H94.5V356.5H95.5V356.5H95.5V356.5H96.5V357.5H97.5V356.5H97.5V356.5H98.5V357.5H99.5V355.5H99.5V356.5H100.5V355.5H101.5V357.5H101.5V357.5H102.5V357.5H103.5V356.5H103.5V356.5H104.5V356.5H105.5V357.5H105.5V357.5H106.5V357.5H107.5V355.5H107.5V357.5H108.5V356.5H109.5V356.5H109.5V358.5H110.5V356.5H111.5V330.5H111.5V358.5H112.5V357.5H113.5V357.5H113.5V357.5H114.5V356.5H115.5V357.5H115.5V358.5H116.5V356.5H117.5V356.5H117.5V356.5H118.5V355.5H119.5V356.5H119.5V356.5H120.5V358.5H121.5V356.5H121.5V357.5H122.5V357.5H123.5V358.5H123.5V357.5H124.5V357.5H125.5V355.5H125.5V358.5H126.5V358.5H127.5V356.5H127.5V355.5H128.5V356.5H129.5V358.5H129.5V359.5H130.5V356.5H131.5V357.5H131.5V358.5H132.5V356.5H133.5V356.5H133.5V356.5H134.5V356.5H135.5V356.5H135.5V355.5H136.5V356.5H137.5V356.5H137.5V356.5H138.5V358.5H139.5V355.5H139.5V356.5H140.5V356.5H141.5V358.5H141.5V357.5H142.5V356.5H143.5V358.5H143.5V357.5H144.5V356.5H145.5V358.5H145.5V355.5H146.5V356.5H146.5V357.5H147.5V356.5H148.5V356.5H148.5V357.5H149.5V356.5H150.5V357.5H150.5V357.5H151.5V356.5H152.5V357.5H152.5V357.5H153.5V356.5H154.5V355.5H154.5V357.5H155.5V358.5H156.5V357.5H156.5V357.5H157.5V357.5H158.5V355.5H158.5V358.5H159.5V356.5H160.5V358.5H160.5V357.5H161.5V356.5H162.5V356.5H162.5V356.5H163.5V356.5H164.5V357.5H164.5V357.5H165.5V356.5H166.5V357.5H166.5V356.5H167.5V356.5H168.5V357.5H168.5V356.5H169.5V356.5H170.5V355.5H170.5V356.5H171.5V357.5H172.5V357.5H172.5V357.5H173.5V356.5H174.5V357.5H174.5V356.5H175.5V355.5H176.5V359.5H176.5V358.5H177.5V357.5H178.5V356.5H178.5V357.5H179.5V357.5H180.5V356.5H180.5V357.5H181.5V357.5H182.5V355.5H182.5V357.5H183.5V357.5H184.5V357.5H184.5V357.5H185.5V357.5H186.5V359.5H186.5V357.5H187.5V356.5H188.5V358.5H188.5V357.5H189.5V356.5H190.5V356.5H190.5V356.5H191.5V358.5H192.5V357.5H192.5V357.5H193.5V356.5H194.5V356.5H194.5V359.5H195.5V356.5H196.5V358.5H196.5V356.5H197.5V358.5H198.5V357.5H198.5V356.5H199.5V357.5H200.5V357.5H200.5V356.5H201.5V357.5H201.5V357.5H202.5V356.5H203.5V356.5H203.5V357.5H204.5V355.5H205.5V358.5H205.5V356.5H206.5V357.5H207.5V357.5H207.5V356.5H208.5V357.5H209.5V356.5H209.5V358.5H210.5V358.5H211.5V356.5H211.5V358.5H212.5V358.5H213.5V358.5H213.5V356.5H214.5V356.5H215.5V356.5H215.5V358.5H216.5V357.5H217.5V358.5H217.5V356.5H218.5V356.5H219.5V358.5H219.5V356.5H220.5V356.5H221.5V357.5H221.5V359.5H222.5V356.5H223.5V357.5H223.5V357.5H224.5V357.5H225.5V357.5H225.5V356.5H226.5V358.5H227.5V356.5H227.5V356.5H228.5V356.5H229.5V357.5H229.5V358.5H230.5V356.5H231.5V357.5H231.5V357.5H232.5V356.5H233.5V357.5H233.5V359.5H234.5V357.5H235.5V359.5H235.5V356.5H236.5V357.5H237.5V358.5H237.5V357.5H238.5V356.5H239.5V357.5H239.5V356.5H240.5V357.5H241.5V356.5H241.5V356.5H242.5V356.5H243.5V358.5H243.5V356.5H244.5V359.5H245.5V358.5H245.5V359.5H246.5V356.5H247.5V358.5H247.5V357.5H248.5V357.5H249.5V357.5H249.5V358.5H250.5V357.5H251.5V355.5H251.5V357.5H252.5V357.5H253.5V356.5H253.5V357.5H254.5V358.5H254.5V358.5H255.5V356.5H256.5V358.5H256.5V358.5H257.5V356.5H258.5V356.5H258.5V357.5H259.5V356.5H260.5V357.5H260.5V358.5H261.5V358.5H262.5V358.5H262.5V356.5H263.5V358.5H264.5V358.5H264.5V358.5H265.5V358.5H266.5V357.5H266.5V358.5H267.5V357.5H268.5V359.5H268.5V357.5H269.5V358.5H270.5V359.5H270.5V356.5H271.5V357.5H272.5V359.5H272.5V358.5H273.5V357.5H274.5V358.5H274.5V356.5H275.5V356.5H276.5V357.5H276.5V357.5H277.5V356.5H278.5V357.5H278.5V357.5H279.5V359.5H280.5V356.5H280.5V356.5H281.5V357.5H282.5V358.5H282.5V355.5H283.5V359.5H284.5V357.5H284.5V355.5H285.5V358.5H286.5V357.5H286.5V356.5H287.5V357.5H288.5V357.5H288.5V356.5H289.5V358.5H290.5V357.5H290.5V357.5H291.5V356.5H292.5V357.5H292.5V357.5H293.5V358.5H294.5V357.5H294.5V356.5H295.5V357.5H296.5V358.5H296.5V358.5H297.5V355.5H298.5V356.5H298.5V357.5H299.5V359.5H300.5V357.5H300.5V357.5H301.5V356.5H302.5V357.5H302.5V357.5H303.5V357.5H304.5V359.5H304.5V356.5H305.5V357.5H306.5V358.5H306.5V356.5H307.5V356.5H308.5V358.5H308.5V358.5H309.5V357.5H309.5V357.5H310.5V358.5H311.5V358.5H311.5V355.5H312.5V356.5H313.5V358.5H313.5V358.5H314.5V356.5H315.5V356.5H315.5V356.5H316.5V357.5H317.5V358.5H317.5V357.5H318.5V359.5H319.5V358.5H319.5V357.5H320.5V357.5H321.5V358.5H321.5V357.5H322.5V357.5H323.5V357.5H323.5V357.5H324.5V357.5H325.5V358.5H325.5V357.5H326.5V357.5H327.5V358.5H327.5V358.5H328.5V357.5H329.5V357.5H329.5V357.5H330.5V357.5H331.5V357.5H331.5V357.5H332.5V358.5H333.5V357.5H333.5V356.5H334.5V357.5H335.5V357.5H335.5V357.5H336.5V358.5H337.5V359.5H337.5V357.5H338.5V358.5H339.5V357.5H339.5V358.5H340.5V360.5H341.5V358.5H341.5V356.5H342.5V358.5H343.5V358.5H343.5V358.5H344.5V357.5H345.5V357.5H345.5V357.5H346.5V356.5H347.5V357.5H347.5V357.5H348.5V357.5H349.5V356.5H349.5V356.5H350.5V356.5H351.5V358.5H351.5V357.5H352.5V357.5H353.5V358.5H353.5V356.5H354.5V357.5H355.5V356.5H355.5V357.5H356.5V355.5H357.5V356.5H357.5V357.5H358.5V357.5H359.5V355.5H359.5V358.5H360.5V357.5H361.5V356.5H361.5V357.5H362.5V358.5H362.5V357.5H363.5V357.5H364.5V356.5H364.5V357.5H365.5V357.5H366.5V357.5H366.5V357.5H367.5V357.5H368.5V357.5H368.5V358.5H369.5V357.5H370.5V358.5H370.5V358.5H371.5V357.5H372.5V359.5H372.5V358.5H373.5V359.5H374.5V358.5H374.5V357.5H375.5V357.5H376.5V357.5H376.5V358.5H377.5V359.5H378.5V356.5H378.5V357.5H379.5V356.5H380.5V358.5H380.5V357.5H381.5V359.5H382.5V357.5H382.5V357.5H383.5V359.5H384.5V357.5H384.5V357.5H385.5V359.5H386.5V359.5H386.5V358.5H387.5V358.5H388.5V359.5H388.5V357.5H389.5V357.5H390.5V357.5H390.5V357.5H391.5V356.5H392.5V356.5H392.5V358.5H393.5V358.5H394.5V358.5H394.5V358.5H395.5V357.5H396.5V357.5H396.5V357.5H397.5V359.5H398.5V358.5H398.5V357.5H399.5V358.5H400.5V334.5H400.5V357.5H401.5V358.5H402.5V357.5H402.5V357.5H403.5V357.5H404.5V358.5H404.5V358.5H405.5V360.5H406.5V358.5H406.5V357.5H407.5V359.5H408.5V357.5H408.5V357.5H409.5V359.5H410.5V358.5H410.5V358.5H411.5V357.5H412.5V357.5H412.5V357.5H413.5V358.5H414.5V357.5H414.5V357.5H415.5V357.5H416.5V357.5H416.5V358.5H417.5V359.5H417.5V358.5H418.5V358.5H419.5V358.5H419.5V357.5H420.5V358.5H421.5V357.5H421.5V357.5H422.5V358.5H423.5V355.5H423.5V358.5H424.5V356.5H425.5V357.5H425.5V356.5H426.5V359.5H427.5V358.5H427.5V357.5H428.5V357.5H429.5V355.5H429.5V357.5H430.5V356.5H431.5V357.5H431.5V357.5H432.5V357.5H433.5V358.5H433.5V357.5H434.5V358.5H435.5V356.5H435.5V358.5H436.5V357.5H437.5V356.5H437.5V358.5H438.5V357.5H439.5V356.5H439.5V357.5H440.5V358.5H441.5V357.5H441.5V357.5H442.5V357.5H443.5V358.5H443.5V356.5H444.5V356.5H445.5V357.5H445.5V357.5H446.5V358.5H447.5V356.5H447.5V358.5H448.5V357.5H449.5V358.5H449.5V358.5H450.5V357.5H451.5V356.5H451.5V357.5H452.5V358.5H453.5V357.5H453.5V357.5H454.5V357.5H455.5V356.5H455.5V356.5H456.5V358.5H457.5V355.5H457.5V357.5H458.5V357.5H459.5V358.5H459.5V357.5H460.5V359.5H461.5V356.5H461.5V356.5H462.5V358.5H463.5V359.5H463.5V359.5H464.5V356.5H465.5V358.5H465.5V357.5H466.5V358.5H467.5V358.5H467.5V358.5H468.5V357.5H469.5V359.5H469.5V357.5H470.5V357.5H470.5V357.5H471.5V358.5H472.5V358.5H472.5V357.5H473.5V358.5H474.5V356.5H474.5V357.5H475.5V358.5H476.5V358.5H476.5V358.5H477.5V358.5H478.5V358.5H478.5V357.5H479.5V357.5H480.5V357.5H480.5V356.5H481.5V358.5H482.5V357.5H482.5V355.5H483.5V359.5H484.5V358.5H484.5V357.5H485.5V357.5H486.5V357.5H486.5V358.5H487.5V357.5H488.5V357.5H488.5V357.5H489.5V359.5H490.5V358.5H490.5V357.5H491.5V358.5H492.5V358.5H492.5V357.5H493.5V358.5H494.5V357.5H494.5V357.5H495.5V357.5H496.5V357.5H496.5V358.5H497.5V359.5H498.5V357.5H498.5V357.5H499.5V358.5H500.5V358.5H500.5V357.5H501.5V358.5H502.5V357.5H502.5V356.5H503.5V358.5H504.5V357.5H504.5V358.5H505.5V356.5H506.5V357.5H506.5V357.5H507.5V358.5H508.5V357.5H508.5V357.5H509.5V359.5H510.5V356.5H510.5V357.5H511.5V359.5H512.5V357.5H512.5V358.5H513.5V357.5H514.5V357.5H514.5V359.5H515.5V358.5H516.5V356.5H516.5V358.5H517.5V358.5H518.5V359.5H518.5V359.5H519.5V357.5H520.5V356.5H520.5V357.5H521.5V357.5H522.5V356.5H522.5V358.5H523.5V358.5H524.5V357.5H524.5V357.5H525.5V358.5H525.5V359.5H526.5V357.5H527.5V357.5H527.5V359.5H528.5V358.5H529.5V358.5H529.5V357.5H530.5V358.5H531.5V358.5H531.5V358.5H532.5V357.5H533.5V356.5H533.5V358.5H534.5V357.5H535.5V358.5H535.5V357.5H536.5V357.5H537.5V356.5H537.5V358.5H538.5V358.5H539.5V357.5H539.5V359.5H540.5V357.5H541.5V358.5H541.5V357.5H542.5V358.5H543.5V359.5H543.5V357.5H544.5V357.5H545.5V358.5H545.5V357.5H546.5V358.5H547.5V358.5H547.5V357.5H548.5V359.5H549.5V358.5H549.5V358.5H550.5V357.5H551.5V358.5H551.5V357.5H552.5V358.5H553.5V357.5H553.5V356.5H554.5V358.5H555.5V355.5H555.5V358.5H556.5V358.5H557.5V357.5H557.5V357.5H558.5V359.5H559.5V359.5H559.5V357.5H560.5V357.5H561.5V357.5H561.5V355.5H562.5V357.5H563.5V357.5H563.5V357.5H564.5V357.5H565.5V356.5H565.5V359.5H566.5V358.5H567.5V361.5H567.5V357.5H568.5V358.5H569.5V357.5H569.5V356.5H570.5V358.5H571.5V358.5H571.5V358.5H572.5V358.5H573.5V358.5H573.5V357.5H574.5V357.5H575.5V357.5H575.5V358.5H576.5V357.5H577.5V357.5H577.5V358.5H578.5V357.5H578.5V358.5H579.5V359.5H580.5V356.5H580.5V357.5H581.5V358.5H582.5V357.5H582.5V357.5H583.5V359.5H584.5V356.5H584.5V357.5H585.5V357.5H586.5V357.5H586.5V358.5H587.5V359.5H588.5V357.5H588.5V358.5H589.5V358.5H590.5V357.5H590.5V357.5H591.5V357.5H592.5V358.5H592.5V358.5H593.5V359.5H594.5V358.5H594.5V357.5H595.5V356.5H596.5V358.5H596.5V358.5H597.5V356.5H598.5V358.5H598.5V357.5H599.5V356.5H600.5V358.5H600.5V356.5H601.5V358.5H602.5V357.5H602.5V358.5H603.5V357.5H604.5V357.5H604.5V355.5H605.5V358.5H606.5V358.5H606.5V357.5H607.5V358.5H608.5V357.5H608.5V357.5H609.5V358.5H610.5V357.5H610.5V359.5H611.5V357.5H612.5V359.5H612.5V358.5H613.5V358.5H614.5V358.5H614.5V357.5H615.5V357.5H616.5V358.5H616.5V357.5H617.5V356.5H618.5V358.5H618.5V357.5H619.5V356.5H620.5V357.5H620.5V359.5H621.5V355.5H622.5V356.5H622.5V359.5H623.5V358.5H624.5V357.5H624.5V357.5H625.5V357.5H626.5V358.5H626.5V358.5H627.5V357.5H628.5V357.5H628.5V359.5H629.5V358.5H630.5V358.5H630.5V359.5H631.5V358.5H632.5V358.5H632.5V357.5H633.5V358.5H633.5V358.5H634.5V358.5H635.5V358.5H635.5V358.5H636.5V358.5H637.5V357.5H637.5V357.5H638.5V356.5H639.5V358.5H639.5V358.5H640.5V360.5H641.5V356.5H641.5V358.5H642.5V358.5H643.5V357.5H643.5V359.5H644.5V357.5H645.5V358.5H645.5V359.5H646.5V357.5H647.5V357.5H647.5V359.5H648.5V357.5H649.5V357.5H649.5V357.5H650.5V357.5H651.5V356.5H651.5V358.5H652.5V357.5H653.5V358.5H653.5V357.5H654.5V358.5H655.5V358.5H655.5V356.5H656.5V357.5H657.5V358.5H657.5V359.5H658.5V358.5H659.5V357.5H659.5V357.5H660.5V357.5H661.5V357.5H661.5V358.5H662.5V356.5H663.5V358.5H663.5V358.5H664.5V357.5H665.5V358.5H665.5V358.5H666.5V358.5H667.5V358.5H667.5V357.5H668.5V357.5H669.5V359.5H669.5V357.5H670.5V357.5H671.5V358.5H671.5V357.5H672.5V358.5H673.5V358.5H673.5V357.5H674.5V356.5H675.5V358.5H675.5V357.5H676.5V358.5H677.5V356.5H677.5V358.5H678.5V357.5H679.5V358.5H679.5V357.5H680.5V356.5H681.5V360.5H681.5V358.5H682.5V357.5H683.5V358.5H683.5V358.5H684.5V356.5H685.5V358.5H685.5V359.5H686.5V357.5H686.5V359.5H687.5V357.5H688.5V358.5H688.5V357.5H689.5V357.5H690.5V358.5H690.5V359.5H691.5V359.5H692.5V357.5H692.5V357.5H693.5V358.5H694.5V357.5H694.5V357.5H695.5V357.5H696.5V360.5H696.5V358.5H697.5V357.5H698.5V357.5H698.5V357.5H699.5V360.5H700.5V357.5H700.5V357.5H701.5V355.5H702.5V358.5H702.5V358.5H703.5V358.5H704.5V357.5H704.5V358.5H705.5V357.5H706.5V358.5H706.5V357.5H707.5V358.5H708.5V357.5H708.5V358.5H709.5V359.5H710.5V357.5H710.5V357.5H711.5V358.5H712.5V357.5H712.5V357.5H713.5V358.5H714.5V358.5H714.5V357.5H715.5V357.5H716.5V358.5H716.5V359.5H717.5V357.5H718.5V357.5H718.5V358.5H719.5V358.5H720.5V357.5H720.5V358.5H721.5V359.5H722.5V358.5H722.5V358.5H723.5V358.5H724.5V359.5H724.5V357.5H725.5V359.5H726.5V357.5H726.5V359.5H727.5V357.5H728.5V356.5H728.5V357.5H729.5V358.5H730.5V358.5H730.5V357.5H731.5V359.5H732.5V358.5H732.5V357.5H733.5V358.5H734.5V358.5H734.5V357.5H735.5V357.5H736.5V357.5H736.5V357.5H737.5V358.5H738.5V358.5H738.5V358.5H739.5V358.5H740.5V358.5H740.5V359.5H741.5V358.5H741.5V358.5H742.5V358.5H743.5V358.5H743.5V357.5H744.5V358.5H745.5V356.5H745.5V360.5H746.5V358.5H747.5V359.5H747.5V357.5H748.5V355.5H749.5V360.5H749.5V358.5H750.5V357.5H751.5V358.5H751.5V357.5H752.5V360.5H753.5V357.5H753.5V357.5H754.5V358.5H755.5V358.5H755.5V357.5H756.5V358.5H757.5V357.5H757.5V358.5H758.5V360.5H759.5V358.5H759.5V357.5H760.5V357.5H761.5V358.5H761.5V358.5H762.5V357.5H763.5V358.5H763.5V357.5H764.5V356.5H765.5V358.5H765.5V359.5H766.5V357.5H767.5V356.5H767.5V357.5H768.5V357.5H769.5V358.5H769.5V358.5H770.5V357.5H771.5V358.5H771.5V359.5H772.5V359.5H773.5V355.5H773.5V356.5H774.5V358.5H775.5V358.5H775.5V357.5H776.5V358.5H777.5V357.5H777.5V358.5H778.5V359.5H779.5V357.5H779.5V358.5H780.5V357.5H781.5V358.5H781.5V358.5H782.5V357.5H783.5V358.5H783.5V359.5H784.5V360.5H785.5V359.5H785.5V358.5H786.5V358.5H787.5V358.5H787.5V357.5H788.5V358.5H789.5V358.5H789.5V358.5H790.5V359.5H791.5V358.5H791.5V357.5H792.5V357.5H793.5V358.5H793.5V358.5H794.5V357.5H794.5V358.5H795.5V357.5H796.5V357.5H796.5V357.5H797.5V357.5H798.5V358.5H798.5V358.5H799.5V358.5H800.5V358.5H800.5V356.5H801.5V356.5H802.5V358.5H802.5V357.5H803.5V357.5H804.5V357.5H804.5V357.5H805.5V359.5H806.5V358.5H806.5V357.5H807.5V356.5H808.5V358.5H808.5V358.5H809.5V358.5H810.5V358.5H810.5V358.5H811.5V356.5H812.5V358.5H812.5V358.5H813.5V356.5H814.5V357.5H814.5V357.5H815.5V358.5H816.5V357.5H816.5V356.5H817.5V357.5H818.5V357.5H818.5V358.5H819.5V357.5H820.5V358.5H820.5V357.5H821.5V357.5H822.5V359.5H822.5V358.5H823.5V357.5H824.5V358.5H824.5V358.5H825.5V357.5H826.5V356.5H826.5V357.5H827.5V357.5H828.5V359.5H828.5V356.5H829.5V358.5H830.5V358.5H830.5V359.5H831.5V358.5H832.5V359.5H832.5V358.5H833.5V357.5H834.5V358.5H834.5V357.5H835.5V358.5H836.5V356.5H836.5V358.5H837.5V359.5H838.5V358.5H838.5V358.5H839.5V359.5H840.5V358.5H840.5V357.5H841.5V359.5H842.5V358.5H842.5V356.5H843.5V357.5H844.5V358.5H844.5V358.5H845.5V358.5H846.5V358.5H846.5V357.5H847.5V358.5H848.5V360.5H848.5V358.5H849.5V358.5H849.5V357.5H850.5V358.5H851.5V358.5H851.5V356.5H852.5V359.5H853.5V359.5H853.5V359.5H854.5V360.5H855.5V359.5H855.5V357.5H856.5V358.5H857.5V359.5H857.5V359.5H858.5V357.5H859.5V358.5H859.5V358.5H860.5V357.5H861.5V357.5H861.5V356.5H862.5V357.5H863.5V358.5H863.5V358.5H864.5V356.5H865.5V356.5H865.5V358.5H866.5V357.5H867.5V357.5H867.5V358.5H868.5V358.5H869.5V359.5H869.5V358.5H870.5V359.5H871.5V357.5H871.5V357.5H872.5V359.5H873.5V356.5H873.5V357.5H874.5V359.5H875.5V356.5H875.5V357.5H876.5V356.5H877.5V359.5H877.5V357.5H878.5V357.5H879.5V358.5H879.5V358.5H880.5V357.5H881.5V359.5H881.5V359.5H882.5V359.5H883.5V358.5H883.5V358.5H884.5V357.5H885.5V357.5H885.5V358.5H886.5V358.5H887.5V358.5H887.5V357.5H888.5V357.5H889.5V358.5H889.5V358.5H890.5V356.5H891.5V358.5H891.5V357.5H892.5V357.5H893.5V358.5H893.5V357.5H894.5V359.5H895.5V448.5H895.5V358.5H896.5V359.5H897.5V357.5H897.5V358.5H898.5V357.5H899.5V358.5H899.5V358.5H900.5V357.5H901.5V358.5H901.5V357.5H902.5V358.5H902.5V357.5H903.5V358.5H904.5V358.5H904.5V360.5H905.5V357.5H906.5V358.5H906.5V359.5H907.5V358.5H908.5V357.5H908.5V357.5H909.5V359.5H910.5V356.5H910.5V358.5H911.5V356.5H912.5V358.5H912.5V357.5H913.5V358.5H914.5V359.5H914.5V357.5H915.5V357.5H916.5V356.5H916.5V357.5H917.5V358.5H918.5V359.5H918.5V358.5H919.5V358.5H920.5V358.5H920.5V357.5H921.5V357.5H922.5V358.5H922.5V358.5H923.5V358.5H924.5V358.5H924.5V357.5H925.5V357.5H926.5V358.5H926.5V359.5H927.5V356.5H928.5V358.5H928.5V357.5" fill="none" stroke="#ff0ec4" stroke-width="1" stroke-linecap="square"/>
<text x="71" y="452.5" text-anchor="end" shape-rendering="auto">0</text>
<text x="71" y="431.5" text-anchor="end" shape-rendering="auto">25</text>
<text x="71" y="411.5" text-anchor="end" shape-rendering="auto">50</text>
<text x="71" y="390.5" text-anchor="end" shape-rendering="auto">75</text>
<text x="71" y="369.5" text-anchor="end" shape-rendering="auto">100</text>
<text x="71" y="349.5" text-anchor="end" shape-rendering="auto">125</text>
<text x="71" y="328.5" text-anchor="end" shape-rendering="auto">150</text>
<path d="M88.5 451v3M94.5 451v3M101.5 451v3M107.5 451v3M114.5 451v3M121.5 451v3M127.5 451v3M134.5 451v3M141.5 451v3M147.5 451v3M154.5 451v3M160.5 451v3M172.5 451v3M179.5 451v3M186.5 451v3M192.5 451v3M199.5 451v3M205.5 451v3M212.5 451v3M219.5 451v3M225.5 451v3M232.5 451v3M239.5 451v3M245.5 451v3M257.5 451v3M264.5 451v3M270.5 451v3M277.5 451v3M284.5 451v3M290.5 451v3M297.5 451v3M304.5 451v3M310.5 451v3M317.5 451v3M323.5 451v3M330.5 451v3M342.5 451v3M349.5 451v3M355.5 451v3M362.5 451v3M368.5 451v3M375.5 451v3M382.5 451v3M388.5 451v3M395.5 451v3M402.5 451v3M408.5 451v3M415.5 451v3M427.5 451v3M433.5 451v3M440.5 451v3M447.5 451v3M453.5 451v3M460.5 451v3M467.5 451v3M473.5 451v3M480.5 451v3M486.5 451v3M493.5 451v3M500.5 451v3M512.5 451v3M518.5 451v3M525.5 451v3M531.5 451v3M538.5 451v3M545.5 451v3M551.5 451v3M558.5 451v3M565.5 451v3M571.5 451v3M578.5 451v3M584.5 451v3M596.5 451v3M603.5 451v3M610.5 451v3M616.5 451v3M623.5 451v3M630.5 451v3M636.5 451v3M643.5 451v3M649.5 451v3M656.5 451v3M663.5 451v3M669.5 451v3M681.5 451v3M688.5 451v3M694.5 451v3M701.5 451v3M708.5 451v3M714.5 451v3M721.5 451v3M728.5 451v3M734.5 451v3M741.5 451v3M747.5 451v3M754.5 451v3M766.5 451v3M773.5 451v3M779.5 451v3M786.5 451v3M793.5 451v3M799.5 451v3M806.5 451v3M812.5 451v3M819.5 451v3M826.5 451v3M832.5 451v3M839.5 451v3M851.5 451v3M857.5 451v3M864.5 451v3M871.5 451v3M877.5 451v3M884.5 451v3M891.5 451v3M897.5 451v3M904.5 451v3M910.5 451v3M917.5 451v3M924.5 451v3M81.5 451v5M166.5 451v5M251.5 451v5M335.5 451v5M420.5 451v5M505.5 451v5M590.5 451v5M675.5 451v5M759.5 451v5M844.5 451v5M929.5 451v5M74 448.5h5M74 427.5h5M74 407.5h5M74 386.5h5M74 365.5h5M74 345.5h5M74 324.5h5" stroke="#000" stroke-width="1" fill="none"/>
<text x="80.7" y="467" text-anchor="middle">0</text>
<text x="165.7" y="467" text-anchor="middle">128</text>
<text x="250.7" y="467" text-anchor="middle">256</text>
<text x="334.7" y="467" text-anchor="middle">384</text>
<text x="419.7" y="467" text-anchor="middle">512</text>
<text x="504.7" y="467" text-anchor="middle">640</text>
<text x="589.7" y="467" text-anchor="middle">768</text>
<text x="674.7" y="467" text-anchor="middle">896</text>
<text x="758.7" y="467" text-anchor="middle">1024</text>
<text x="843.7" y="467" text-anchor="middle">1152</text>
<text x="928.7" y="467" text-anchor="middle">1280</text>
<text transform="translate(48,386.5) rotate(-90)" text-anchor="middle">Gain (mV/fC)</text>
</svg>
<div class="chart" style="left:34px;top:473px;width:920px;height:160px"></div>
<div style="left:34px;top:473px;width:920px;height:2px;background:linear-gradient(to right,#dcdcdc 0,#d8d8d8 900px,#b0b0b0 920px)"></div>
<div style="left:34px;top:631px;width:920px;height:2px;background:linear-gradient(to bottom,#b4b4b4,#969696)"></div>
<svg style="left:0;top:0" width="1051" height="1018" viewBox="0 0 1051 1018" shape-rendering="crispEdges" font-family="Liberation Sans, sans-serif" font-size="11">
<rect x="79" y="484" width="851" height="125" fill="#000"/>
<path d="M164.5 484V609M249.5 484V609M334.5 484V609M419.5 484V609M504.5 484V609M589.5 484V609M674.5 484V609M759.5 484V609M844.5 484V609" stroke="#08f408" stroke-width="1" fill="none"/>
<path d="M79.5 589.5H80.5V577.5H80.5V573.5H81.5V586.5H82.5V578.5H82.5V608.5H83.5V564.5H84.5V559.5H84.5V581.5H85.5V586.5H86.5V568.5H86.5V565.5H87.5V571.5H88.5V584.5H88.5V566.5H89.5V566.5H90.5V568.5H90.5V577.5H91.5V570.5H92.5V565.5H92.5V577.5H93.5V588.5H94.5V569.5H94.5V568.5H95.5V572.5H96.5V564.5H96.5V577.5H97.5V572.5H98.5V574.5H98.5V566.5H99.5V557.5H100.5V573.5H100.5V553.5H101.5V557.5H102.5V564.5H102.5V566.5H103.5V555.5H104.5V572.5H104.5V572.5H105.5V580.5H106.5V566.5H106.5V558.5H107.5V565.5H108.5V566.5H108.5V572.5H109.5V608.5H110.5V582.5H110.5V560.5H111.5V573.5H112.5V579.5H112.5V576.5H113.5V577.5H114.5V562.5H114.5V560.5H115.5V581.5H116.5V561.5H116.5V561.5H117.5V574.5H118.5V582.5H118.5V575.5H119.5V574.5H120.5V565.5H120.5V572.5H121.5V586.5H122.5V566.5H122.5V582.5H123.5V560.5H124.5V579.5H124.5V574.5H125.5V575.5H126.5V573.5H126.5V556.5H127.5V560.5H128.5V562.5H128.5V564.5H129.5V581.5H130.5V572.5H130.5V572.5H131.5V576.5H132.5V562.5H132.5V573.5H133.5V573.5H134.5V576.5H134.5V585.5H135.5V561.5H136.5V555.5H136.5V565.5H137.5V575.5H138.5V590.5H138.5V564.5H139.5V555.5H140.5V563.5H140.5V557.5H141.5V553.5H142.5V556.5H142.5V569.5H143.5V556.5H144.5V558.5H144.5V579.5H145.5V569.5H145.5V578.5H146.5V566.5H147.5V560.5H147.5V574.5H148.5V583.5H149.5V553.5H149.5V561.5H150.5V551.5H151.5V576.5H151.5V555.5H152.5V546.5H153.5V546.5H153.5V566.5H154.5V561.5H155.5V565.5H155.5V555.5H156.5V554.5H157.5V563.5H157.5V575.5H158.5V557.5H159.5V567.5H159.5V558.5H160.5V561.5H161.5V549.5H161.5V553.5H162.5V567.5H163.5V560.5H163.5V547.5H164.5V571.5H165.5V562.5H165.5V556.5H166.5V555.5H167.5V561.5H167.5V578.5H168.5V577.5H169.5V564.5H169.5V563.5H170.5V543.5H171.5V574.5H171.5V556.5H172.5V559.5H173.5V581.5H173.5V573.5H174.5V564.5H175.5V570.5H175.5V567.5H176.5V561.5H177.5V573.5H177.5V561.5H178.5V571.5H179.5V570.5H179.5V561.5H180.5V570.5H181.5V563.5H181.5V551.5H182.5V565.5H183.5V566.5H183.5V559.5H184.5V568.5H185.5V555.5H185.5V576.5H186.5V559.5H187.5V569.5H187.5V572.5H188.5V549.5H189.5V572.5H189.5V549.5H190.5V559.5H191.5V552.5H191.5V573.5H192.5V554.5H193.5V552.5H193.5V565.5H194.5V566.5H195.5V542.5H195.5V563.5H196.5V568.5H197.5V570.5H197.5V560.5H198.5V561.5H199.5V562.5H199.5V549.5H200.5V567.5H201.5V560.5H201.5V551.5H202.5V573.5H203.5V554.5H203.5V547.5H204.5V576.5H205.5V573.5H205.5V573.5H206.5V580.5H207.5V559.5H207.5V580.5H208.5V559.5H209.5V550.5H209.5V578.5H210.5V566.5H211.5V580.5H211.5V556.5H212.5V570.5H213.5V565.5H213.5V562.5H214.5V558.5H215.5V566.5H215.5V563.5H216.5V568.5H217.5V562.5H217.5V573.5H218.5V562.5H219.5V580.5H219.5V567.5H220.5V545.5H221.5V562.5H221.5V573.5H222.5V560.5H223.5V571.5H223.5V577.5H224.5V569.5H225.5V556.5H225.5V559.5H226.5V563.5H227.5V570.5H227.5V571.5H228.5V550.5H228.5V560.5H229.5V570.5H230.5V580.5H230.5V574.5H231.5V540.5H232.5V572.5H232.5V562.5H233.5V560.5H234.5V563.5H234.5V564.5H235.5V574.5H236.5V571.5H236.5V546.5H237.5V568.5H238.5V554.5H238.5V576.5H239.5V564.5H240.5V559.5H240.5V552.5H241.5V571.5H242.5V556.5H242.5V558.5H243.5V568.5H244.5V557.5H244.5V569.5H245.5V568.5H246.5V561.5H246.5V585.5H247.5V562.5H248.5V570.5H248.5V574.5H249.5V565.5H250.5V554.5H250.5V564.5H251.5V549.5H252.5V571.5H252.5V572.5H253.5V547.5H254.5V557.5H254.5V552.5H255.5V568.5H256.5V553.5H256.5V558.5H257.5V555.5H258.5V560.5H258.5V550.5H259.5V566.5H260.5V569.5H260.5V574.5H261.5V550.5H262.5V567.5H262.5V570.5H263.5V569.5H264.5V564.5H264.5V572.5H265.5V563.5H266.5V566.5H266.5V565.5H267.5V569.5H268.5V560.5H268.5V565.5H269.5V559.5H270.5V558.5H270.5V557.5H271.5V580.5H272.5V565.5H272.5V568.5H273.5V554.5H274.5V575.5H274.5V567.5H275.5V563.5H276.5V564.5H276.5V552.5H277.5V565.5H278.5V552.5H278.5V574.5H279.5V577.5H280.5V550.5H280.5V557.5H281.5V556.5H282.5V560.5H282.5V556.5H283.5V572.5H284.5V552.5H284.5V565.5H285.5V552.5H286.5V560.5H286.5V578.5H287.5V572.5H288.5V551.5H288.5V562.5H289.5V564.5H290.5V559.5H290.5V565.5H291.5V566.5H292.5V560.5H292.5V560.5H293.5V548.5H294.5V561.5H294.5V544.5H295.5V545.5H296.5V546.5H296.5V552.5H297.5V560.5H298.5V560.5H298.5V563.5H299.5V568.5H300.5V562.5H300.5V567.5H301.5V547.5H302.5V557.5H302.5V566.5H303.5V579.5H304.5V562.5H304.5V565.5H305.5V571.5H306.5V572.5H306.5V582.5H307.5V557.5H308.5V563.5H308.5V539.5H309.5V562.5H310.5V563.5H310.5V549.5H311.5V561.5H311.5V561.5H312.5V566.5H313.5V568.5H313.5V549.5H314.5V554.5H315.5V547.5H315.5V566.5H316.5V562.5H317.5V570.5H317.5V554.5H318.5V575.5H319.5V558.5H319.5V553.5H320.5V550.5H321.5V571.5H321.5V553.5H322.5V569.5H323.5V570.5H323.5V575.5H324.5V553.5H325.5V549.5H325.5V569.5H326.5V570.5H327.5V566.5H327.5V541.5H328.5V555.5H329.5V568.5H329.5V580.5H330.5V570.5H331.5V553.5H331.5V547.5H332.5V566.5H333.5V570.5H333.5V568.5H334.5V581.5H335.5V556.5H335.5V574.5H336.5V555.5H337.5V579.5H337.5V575.5H338.5V562.5H339.5V571.5H339.5V557.5H340.5V564.5H341.5V575.5H341.5V559.5H342.5V557.5H343.5V582.5H343.5V548.5H344.5V560.5H345.5V558.5H345.5V581.5H346.5V571.5H347.5V568.5H347.5V555.5H348.5V578.5H349.5V573.5H349.5V583.5H350.5V567.5H351.5V562.5H351.5V580.5H352.5V570.5H353.5V561.5H353.5V551.5H354.5V559.5H355.5V568.5H355.5V576.5H356.5V574.5H357.5V571.5H357.5V564.5H358.5V566.5H359.5V551.5H359.5V563.5H360.5V575.5H361.5V552.5H361.5V557.5H362.5V565.5H363.5V572.5H363.5V583.5H364.5V575.5H365.5V558.5H365.5V573.5H366.5V578.5H367.5V564.5H367.5V564.5H368.5V561.5H369.5V560.5H369.5V554.5H370.5V574.5H371.5V558.5H371.5V575.5H372.5V560.5H373.5V565.5H373.5V564.5H374.5V558.5H375.5V567.5H375.5V557.5H376.5V559.5H377.5V565.5H377.5V571.5H378.5V573.5H379.5V571.5H379.5V568.5H380.5V567.5H381.5V540.5H381.5V561.5H382.5V560.5H383.5V574.5H383.5V573.5H384.5V569.5H385.5V565.5H385.5V576.5H386.5V552.5H387.5V572.5H387.5V557.5H388.5V587.5H389.5V567.5H389.5V564.5H390.5V565.5H391.5V561.5H391.5V564.5H392.5V565.5H393.5V583.5H393.5V573.5H394.5V587.5H394.5V561.5H395.5V564.5H396.5V568.5H396.5V574.5H397.5V572.5H398.5V608.5H398.5V551.5H399.5V567.5H400.5V555.5H400.5V581.5H401.5V584.5H402.5V571.5H402.5V574.5H403.5V572.5H404.5V565.5H404.5V540.5H405.5V572.5H406.5V566.5H406.5V564.5H407.5V567.5H408.5V558.5H408.5V551.5H409.5V577.5H410.5V565.5H410.5V569.5H411.5V563.5H412.5V580.5H412.5V582.5H413.5V587.5H414.5V562.5H414.5V564.5H415.5V566.5H416.5V587.5H416.5V569.5H417.5V573.5H418.5V579.5H418.5V574.5H419.5V540.5H420.5V542.5H420.5V547.5H421.5V542.5H422.5V553.5H422.5V546.5H423.5V546.5H424.5V541.5H424.5V547.5H425.5V548.5H426.5V548.5H426.5V553.5H427.5V524.5H428.5V542.5H428.5V542.5H429.5V524.5H430.5V533.5H430.5V562.5H431.5V540.5H432.5V538.5H432.5V528.5H433.5V533.5H434.5V539.5H434.5V558.5H435.5V555.5H436.5V544.5H436.5V541.5H437.5V556.5H438.5V550.5H438.5V550.5H439.5V546.5H440.5V543.5H440.5V549.5H441.5V558.5H442.5V534.5H442.5V530.5H443.5V547.5H444.5V536.5H444.5V542.5H445.5V539.5H446.5V541.5H446.5V553.5H447.5V540.5H448.5V536.5H448.5V555.5H449.5V526.5H450.5V525.5H450.5V528.5H451.5V526.5H452.5V538.5H452.5V549.5H453.5V551.5H454.5V554.5H454.5V544.5H455.5V546.5H456.5V539.5H456.5V565.5H457.5V522.5H458.5V523.5H458.5V546.5H459.5V538.5H460.5V540.5H460.5V542.5H461.5V547.5H462.5V546.5H462.5V553.5H463.5V543.5H464.5V545.5H464.5V542.5H465.5V553.5H466.5V544.5H466.5V544.5H467.5V539.5H468.5V555.5H468.5V541.5H469.5V535.5H470.5V539.5H470.5V548.5H471.5V549.5H472.5V547.5H472.5V537.5H473.5V529.5H474.5V546.5H474.5V551.5H475.5V541.5H475.5V542.5H476.5V553.5H477.5V552.5H477.5V545.5H478.5V538.5H479.5V556.5H479.5V554.5H480.5V539.5H481.5V556.5H481.5V543.5H482.5V541.5H483.5V545.5H483.5V554.5H484.5V544.5H485.5V547.5H485.5V540.5H486.5V552.5H487.5V533.5H487.5V560.5H488.5V545.5H489.5V544.5H489.5V534.5H490.5V550.5H491.5V538.5H491.5V549.5H492.5V536.5H493.5V526.5H493.5V547.5H494.5V539.5H495.5V553.5H495.5V534.5H496.5V531.5H497.5V543.5H497.5V554.5H498.5V539.5H499.5V532.5H499.5V532.5H500.5V535.5H501.5V561.5H501.5V550.5H502.5V529.5H503.5V555.5H503.5V532.5H504.5V524.5H505.5V535.5H505.5V532.5H506.5V546.5H507.5V555.5H507.5V544.5H508.5V545.5H509.5V543.5H509.5V536.5H510.5V544.5H511.5V541.5H511.5V538.5H512.5V543.5H513.5V524.5H513.5V538.5H514.5V542.5H515.5V544.5H515.5V549.5H516.5V529.5H517.5V541.5H517.5V553.5H518.5V548.5H519.5V544.5H519.5V547.5H520.5V531.5H521.5V554.5H521.5V537.5H522.5V541.5H523.5V554.5H523.5V542.5H524.5V543.5H525.5V537.5H525.5V546.5H526.5V539.5H527.5V558.5H527.5V553.5H528.5V534.5H529.5V532.5H529.5V542.5H530.5V548.5H531.5V531.5H531.5V563.5H532.5V550.5H533.5V535.5H533.5V535.5H534.5V552.5H535.5V560.5H535.5V527.5H536.5V540.5H537.5V551.5H537.5V541.5H538.5V533.5H539.5V567.5H539.5V531.5H540.5V534.5H541.5V562.5H541.5V534.5H542.5V559.5H543.5V530.5H543.5V537.5H544.5V519.5H545.5V547.5H545.5V541.5H546.5V531.5H547.5V548.5H547.5V548.5H548.5V545.5H549.5V542.5H549.5V552.5H550.5V536.5H551.5V536.5H551.5V541.5H552.5V524.5H553.5V544.5H553.5V528.5H554.5V547.5H555.5V534.5H555.5V560.5H556.5V539.5H557.5V543.5H557.5V546.5H558.5V547.5H558.5V545.5H559.5V548.5H560.5V563.5H560.5V547.5H561.5V547.5H562.5V546.5H562.5V552.5H563.5V542.5H564.5V533.5H564.5V544.5H565.5V546.5H566.5V528.5H566.5V531.5H567.5V532.5H568.5V530.5H568.5V544.5H569.5V542.5H570.5V530.5H570.5V547.5H571.5V542.5H572.5V537.5H572.5V537.5H573.5V544.5H574.5V531.5H574.5V543.5H575.5V534.5H576.5V530.5H576.5V535.5H577.5V534.5H578.5V553.5H578.5V554.5H579.5V547.5H580.5V536.5H580.5V526.5H581.5V553.5H582.5V538.5H582.5V550.5H583.5V548.5H584.5V544.5H584.5V534.5H585.5V539.5H586.5V529.5H586.5V551.5H587.5V532.5H588.5V532.5H588.5V540.5H589.5V536.5H590.5V547.5H590.5V552.5H591.5V545.5H592.5V548.5H592.5V513.5H593.5V546.5H594.5V525.5H594.5V539.5H595.5V538.5H596.5V534.5H596.5V549.5H597.5V532.5H598.5V538.5H598.5V556.5H599.5V535.5H600.5V536.5H600.5V537.5H601.5V526.5H602.5V545.5H602.5V536.5H603.5V534.5H604.5V550.5H604.5V530.5H605.5V556.5H606.5V554.5H606.5V536.5H607.5V552.5H608.5V543.5H608.5V558.5H609.5V541.5H610.5V553.5H610.5V538.5H611.5V557.5H612.5V537.5H612.5V544.5H613.5V541.5H614.5V542.5H614.5V540.5H615.5V555.5H616.5V567.5H616.5V541.5H617.5V551.5H618.5V546.5H618.5V538.5H619.5V562.5H620.5V549.5H620.5V548.5H621.5V552.5H622.5V539.5H622.5V543.5H623.5V550.5H624.5V552.5H624.5V534.5H625.5V549.5H626.5V536.5H626.5V538.5H627.5V561.5H628.5V553.5H628.5V542.5H629.5V539.5H630.5V534.5H630.5V534.5H631.5V532.5H632.5V546.5H632.5V544.5H633.5V535.5H634.5V547.5H634.5V532.5H635.5V558.5H636.5V536.5H636.5V544.5H637.5V562.5H638.5V533.5H638.5V539.5H639.5V542.5H640.5V553.5H640.5V547.5H641.5V528.5H641.5V551.5H642.5V577.5H643.5V551.5H643.5V555.5H644.5V544.5H645.5V547.5H645.5V552.5H646.5V551.5H647.5V533.5H647.5V557.5H648.5V524.5H649.5V548.5H649.5V554.5H650.5V535.5H651.5V538.5H651.5V554.5H652.5V536.5H653.5V562.5H653.5V552.5H654.5V532.5H655.5V546.5H655.5V556.5H656.5V538.5H657.5V534.5H657.5V544.5H658.5V561.5H659.5V547.5H659.5V539.5H660.5V536.5H661.5V525.5H661.5V546.5H662.5V549.5H663.5V544.5H663.5V532.5H664.5V553.5H665.5V531.5H665.5V571.5H666.5V536.5H667.5V551.5H667.5V539.5H668.5V537.5H669.5V556.5H669.5V545.5H670.5V542.5H671.5V538.5H671.5V553.5H672.5V554.5H673.5V563.5H673.5V519.5H674.5V546.5H675.5V547.5H675.5V559.5H676.5V535.5H677.5V550.5H677.5V530.5H678.5V536.5H679.5V544.5H679.5V537.5H680.5V556.5H681.5V548.5H681.5V550.5H682.5V557.5H683.5V545.5H683.5V546.5H684.5V531.5H685.5V578.5H685.5V552.5H686.5V554.5H687.5V550.5H687.5V541.5H688.5V541.5H689.5V545.5H689.5V550.5H690.5V540.5H691.5V542.5H691.5V564.5H692.5V548.5H693.5V559.5H693.5V557.5H694.5V544.5H695.5V545.5H695.5V544.5H696.5V554.5H697.5V548.5H697.5V555.5H698.5V542.5H699.5V539.5H699.5V528.5H700.5V533.5H701.5V554.5H701.5V550.5H702.5V555.5H703.5V543.5H703.5V526.5H704.5V539.5H705.5V568.5H705.5V558.5H706.5V559.5H707.5V541.5H707.5V546.5H708.5V543.5H709.5V528.5H709.5V554.5H710.5V555.5H711.5V527.5H711.5V543.5H712.5V554.5H713.5V566.5H713.5V561.5H714.5V571.5H715.5V546.5H715.5V546.5H716.5V537.5H717.5V548.5H717.5V553.5H718.5V554.5H719.5V528.5H719.5V564.5H720.5V545.5H721.5V546.5H721.5V540.5H722.5V551.5H723.5V542.5H723.5V539.5H724.5V548.5H724.5V551.5H725.5V549.5H726.5V556.5H726.5V549.5H727.5V550.5H728.5V545.5H728.5V534.5H729.5V534.5H730.5V551.5H730.5V541.5H731.5V544.5H732.5V539.5H732.5V547.5H733.5V544.5H734.5V552.5H734.5V555.5H735.5V538.5H736.5V534.5H736.5V541.5H737.5V543.5H738.5V545.5H738.5V552.5H739.5V565.5H740.5V541.5H740.5V545.5H741.5V553.5H742.5V557.5H742.5V535.5H743.5V565.5H744.5V530.5H744.5V541.5H745.5V524.5H746.5V554.5H746.5V548.5H747.5V552.5H748.5V546.5H748.5V549.5H749.5V555.5H750.5V537.5H750.5V555.5H751.5V552.5H752.5V542.5H752.5V553.5H753.5V552.5H754.5V544.5H754.5V551.5H755.5V560.5H756.5V549.5H756.5V550.5H757.5V531.5H758.5V558.5H758.5V538.5H759.5V555.5H760.5V551.5H760.5V551.5H761.5V545.5H762.5V539.5H762.5V530.5H763.5V554.5H764.5V534.5H764.5V538.5H765.5V540.5H766.5V555.5H766.5V539.5H767.5V549.5H768.5V544.5H768.5V550.5H769.5V541.5H770.5V537.5H770.5V536.5H771.5V550.5H772.5V538.5H772.5V533.5H773.5V557.5H774.5V533.5H774.5V561.5H775.5V542.5H776.5V542.5H776.5V533.5H777.5V545.5H778.5V552.5H778.5V556.5H779.5V560.5H780.5V540.5H780.5V550.5H781.5V555.5H782.5V542.5H782.5V555.5H783.5V552.5H784.5V552.5H784.5V531.5H785.5V533.5H786.5V549.5H786.5V563.5H787.5V545.5H788.5V547.5H788.5V544.5H789.5V542.5H790.5V551.5H790.5V538.5H791.5V539.5H792.5V545.5H792.5V552.5H793.5V552.5H794.5V541.5H794.5V558.5H795.5V549.5H796.5V555.5H796.5V561.5H797.5V541.5H798.5V548.5H798.5V547.5H799.5V539.5H800.5V562.5H800.5V548.5H801.5V544.5H802.5V539.5H802.5V558.5H803.5V540.5H804.5V545.5H804.5V534.5H805.5V536.5H805.5V542.5H806.5V526.5H807.5V547.5H807.5V551.5H808.5V551.5H809.5V556.5H809.5V547.5H810.5V566.5H811.5V548.5H811.5V543.5H812.5V537.5H813.5V550.5H813.5V533.5H814.5V553.5H815.5V548.5H815.5V566.5H816.5V554.5H817.5V555.5H817.5V532.5H818.5V542.5H819.5V558.5H819.5V542.5H820.5V542.5H821.5V549.5H821.5V546.5H822.5V550.5H823.5V552.5H823.5V564.5H824.5V547.5H825.5V534.5H825.5V533.5H826.5V549.5H827.5V554.5H827.5V549.5H828.5V538.5H829.5V543.5H829.5V552.5H830.5V543.5H831.5V548.5H831.5V541.5H832.5V550.5H833.5V561.5H833.5V546.5H834.5V539.5H835.5V557.5H835.5V547.5H836.5V538.5H837.5V550.5H837.5V552.5H838.5V526.5H839.5V538.5H839.5V536.5H840.5V555.5H841.5V530.5H841.5V562.5H842.5V551.5H843.5V539.5H843.5V533.5H844.5V555.5H845.5V552.5H845.5V544.5H846.5V564.5H847.5V539.5H847.5V540.5H848.5V550.5H849.5V540.5H849.5V538.5H850.5V542.5H851.5V540.5H851.5V531.5H852.5V550.5H853.5V544.5H853.5V550.5H854.5V535.5H855.5V549.5H855.5V541.5H856.5V544.5H857.5V544.5H857.5V529.5H858.5V546.5H859.5V531.5H859.5V537.5H860.5V532.5H861.5V547.5H861.5V536.5H862.5V538.5H863.5V551.5H863.5V542.5H864.5V546.5H865.5V545.5H865.5V532.5H866.5V552.5H867.5V561.5H867.5V561.5H868.5V549.5H869.5V551.5H869.5V544.5H870.5V539.5H871.5V528.5H871.5V541.5H872.5V540.5H873.5V551.5H873.5V539.5H874.5V531.5H875.5V531.5H875.5V563.5H876.5V536.5H877.5V529.5H877.5V536.5H878.5V558.5H879.5V547.5H879.5V538.5H880.5V540.5H881.5V552.5H881.5V552.5H882.5V535.5H883.5V557.5H883.5V530.5H884.5V544.5H885.5V541.5H885.5V556.5H886.5V549.5H887.5V537.5H887.5V558.5H888.5V524.5H888.5V557.5H889.5V555.5H890.5V543.5H890.5V539.5H891.5V536.5H892.5V547.5H892.5V545.5H893.5V546.5H894.5V549.5H894.5V568.5H895.5V534.5H896.5V541.5H896.5V542.5H897.5V549.5H898.5V541.5H898.5V543.5H899.5V544.5H900.5V532.5H900.5V559.5H901.5V540.5H902.5V553.5H902.5V546.5H903.5V528.5H904.5V553.5H904.5V544.5H905.5V548.5H906.5V534.5H906.5V552.5H907.5V559.5H908.5V538.5H908.5V546.5H909.5V546.5H910.5V532.5H910.5V551.5H911.5V546.5H912.5V541.5H912.5V538.5H913.5V547.5H914.5V532.5H914.5V521.5H915.5V546.5H916.5V524.5H916.5V562.5H917.5V529.5H918.5V545.5H918.5V541.5H919.5V545.5H920.5V548.5H920.5V554.5H921.5V546.5H922.5V530.5H922.5V531.5H923.5V545.5H924.5V547.5H924.5V549.5H925.5V553.5H926.5V525.5H926.5V536.5H927.5V541.5H928.5V546.5H928.5V551.5" fill="none" stroke="#ffffff" stroke-width="1" stroke-linecap="square"/>
<text x="70" y="612.5" text-anchor="end" shape-rendering="auto">-30</text>
<text x="70" y="591.5" text-anchor="end" shape-rendering="auto">-20</text>
<text x="70" y="571.5" text-anchor="end" shape-rendering="auto">-10</text>
<text x="70" y="550.5" text-anchor="end" shape-rendering="auto">0</text>
<text x="70" y="529.5" text-anchor="end" shape-rendering="auto">10</text>
<text x="70" y="509.5" text-anchor="end" shape-rendering="auto">20</text>
<text x="70" y="488.5" text-anchor="end" shape-rendering="auto">30</text>
<path d="M86.5 611v3M92.5 611v3M99.5 611v3M106.5 611v3M112.5 611v3M119.5 611v3M126.5 611v3M132.5 611v3M139.5 611v3M145.5 611v3M152.5 611v3M159.5 611v3M171.5 611v3M177.5 611v3M184.5 611v3M191.5 611v3M197.5 611v3M204.5 611v3M211.5 611v3M217.5 611v3M224.5 611v3M230.5 611v3M237.5 611v3M244.5 611v3M256.5 611v3M262.5 611v3M269.5 611v3M276.5 611v3M282.5 611v3M289.5 611v3M296.5 611v3M302.5 611v3M309.5 611v3M315.5 611v3M322.5 611v3M329.5 611v3M341.5 611v3M347.5 611v3M354.5 611v3M361.5 611v3M367.5 611v3M374.5 611v3M381.5 611v3M387.5 611v3M394.5 611v3M400.5 611v3M407.5 611v3M414.5 611v3M426.5 611v3M432.5 611v3M439.5 611v3M446.5 611v3M452.5 611v3M459.5 611v3M466.5 611v3M472.5 611v3M479.5 611v3M485.5 611v3M492.5 611v3M499.5 611v3M511.5 611v3M517.5 611v3M524.5 611v3M531.5 611v3M537.5 611v3M544.5 611v3M551.5 611v3M557.5 611v3M564.5 611v3M570.5 611v3M577.5 611v3M584.5 611v3M596.5 611v3M602.5 611v3M609.5 611v3M616.5 611v3M622.5 611v3M629.5 611v3M636.5 611v3M642.5 611v3M649.5 611v3M655.5 611v3M662.5 611v3M669.5 611v3M681.5 611v3M687.5 611v3M694.5 611v3M701.5 611v3M707.5 611v3M714.5 611v3M721.5 611v3M727.5 611v3M734.5 611v3M740.5 611v3M747.5 611v3M754.5 611v3M766.5 611v3M772.5 611v3M779.5 611v3M786.5 611v3M792.5 611v3M799.5 611v3M805.5 611v3M812.5 611v3M819.5 611v3M825.5 611v3M832.5 611v3M839.5 611v3M851.5 611v3M857.5 611v3M864.5 611v3M871.5 611v3M877.5 611v3M884.5 611v3M890.5 611v3M897.5 611v3M904.5 611v3M910.5 611v3M917.5 611v3M924.5 611v3M79.5 611v5M164.5 611v5M249.5 611v5M334.5 611v5M419.5 611v5M504.5 611v5M589.5 611v5M674.5 611v5M759.5 611v5M844.5 611v5M929.5 611v5M73 608.5h5M73 587.5h5M73 567.5h5M73 546.5h5M73 525.5h5M73 505.5h5M73 484.5h5" stroke="#000" stroke-width="1" fill="none"/>
<text x="78.7" y="627" text-anchor="middle">0</text>
<text x="163.7" y="627" text-anchor="middle">128</text>
<text x="248.7" y="627" text-anchor="middle">256</text>
<text x="333.7" y="627" text-anchor="middle">384</text>
<text x="418.7" y="627" text-anchor="middle">512</text>
<text x="503.7" y="627" text-anchor="middle">640</text>
<text x="588.7" y="627" text-anchor="middle">768</text>
<text x="673.7" y="627" text-anchor="middle">896</text>
<text x="758.7" y="627" text-anchor="middle">1024</text>
<text x="843.7" y="627" text-anchor="middle">1152</text>
<text x="928.7" y="627" text-anchor="middle">1280</text>
<text transform="translate(48,546.5) rotate(-90)" text-anchor="middle">Offset (mV)</text>
</svg>
<div class="chart" style="left:34px;top:633px;width:920px;height:160px"></div>
<div style="left:34px;top:633px;width:920px;height:2px;background:linear-gradient(to right,#dcdcdc 0,#d8d8d8 900px,#b0b0b0 920px)"></div>
<div style="left:34px;top:791px;width:920px;height:2px;background:linear-gradient(to bottom,#b4b4b4,#969696)"></div>
<svg style="left:0;top:0" width="1051" height="1018" viewBox="0 0 1051 1018" shape-rendering="crispEdges" font-family="Liberation Sans, sans-serif" font-size="11">
<rect x="75" y="644" width="855" height="125" fill="#000"/>
<path d="M160.5 644V769M246.5 644V769M331.5 644V769M417.5 644V769M502.5 644V769M587.5 644V769M673.5 644V769M758.5 644V769M844.5 644V769" stroke="#08f408" stroke-width="1" fill="none"/>
<path d="M75.5 697.5H76.5V698.5H76.5V703.5H77.5V696.5H78.5V702.5H78.5V696.5H79.5V701.5H80.5V699.5H80.5V696.5H81.5V696.5H82.5V694.5H82.5V700.5H83.5V692.5H84.5V692.5H84.5V697.5H85.5V695.5H86.5V699.5H86.5V697.5H87.5V701.5H88.5V696.5H88.5V696.5H89.5V692.5H90.5V694.5H90.5V694.5H91.5V698.5H92.5V698.5H92.5V698.5H93.5V696.5H94.5V703.5H94.5V695.5H95.5V702.5H96.5V699.5H96.5V697.5H97.5V699.5H98.5V692.5H98.5V698.5H99.5V693.5H100.5V694.5H100.5V699.5H101.5V697.5H102.5V694.5H102.5V699.5H103.5V698.5H104.5V700.5H104.5V698.5H105.5V700.5H106.5V698.5H106.5V695.5H107.5V694.5H108.5V698.5H108.5V698.5H109.5V696.5H110.5V700.5H110.5V703.5H111.5V696.5H112.5V702.5H112.5V696.5H113.5V703.5H114.5V693.5H114.5V703.5H115.5V697.5H116.5V695.5H116.5V703.5H117.5V695.5H118.5V703.5H118.5V706.5H119.5V698.5H120.5V698.5H120.5V701.5H121.5V708.5H122.5V700.5H122.5V701.5H123.5V702.5H124.5V701.5H124.5V706.5H125.5V702.5H126.5V695.5H126.5V696.5H127.5V702.5H128.5V703.5H128.5V700.5H129.5V697.5H130.5V699.5H130.5V705.5H131.5V701.5H132.5V701.5H132.5V696.5H133.5V697.5H134.5V700.5H134.5V697.5H135.5V703.5H136.5V696.5H136.5V703.5H137.5V700.5H138.5V699.5H138.5V705.5H139.5V704.5H140.5V707.5H140.5V701.5H141.5V702.5H142.5V703.5H142.5V700.5H143.5V709.5H144.5V702.5H144.5V702.5H145.5V703.5H146.5V699.5H146.5V696.5H147.5V704.5H148.5V705.5H148.5V704.5H149.5V702.5H150.5V700.5H150.5V705.5H151.5V699.5H152.5V706.5H152.5V700.5H153.5V701.5H154.5V701.5H154.5V696.5H155.5V703.5H156.5V703.5H156.5V701.5H157.5V700.5H158.5V707.5H158.5V702.5H159.5V705.5H160.5V701.5H160.5V698.5H161.5V703.5H162.5V703.5H162.5V702.5H163.5V713.5H164.5V701.5H164.5V701.5H165.5V703.5H166.5V704.5H166.5V706.5H167.5V704.5H168.5V699.5H168.5V704.5H169.5V699.5H170.5V712.5H170.5V705.5H171.5V702.5H172.5V703.5H172.5V709.5H173.5V706.5H174.5V699.5H174.5V708.5H175.5V707.5H176.5V707.5H176.5V705.5H177.5V701.5H178.5V702.5H178.5V710.5H179.5V699.5H180.5V706.5H180.5V706.5H181.5V698.5H182.5V704.5H182.5V708.5H183.5V706.5H184.5V706.5H184.5V707.5H185.5V705.5H186.5V701.5H186.5V703.5H187.5V708.5H188.5V695.5H188.5V707.5H189.5V704.5H190.5V704.5H190.5V701.5H191.5V705.5H192.5V703.5H192.5V697.5H193.5V704.5H194.5V708.5H194.5V703.5H195.5V707.5H196.5V705.5H196.5V704.5H197.5V703.5H198.5V705.5H198.5V701.5H199.5V705.5H200.5V708.5H200.5V701.5H201.5V705.5H202.5V700.5H202.5V706.5H203.5V702.5H204.5V703.5H204.5V713.5H205.5V709.5H206.5V708.5H206.5V700.5H207.5V711.5H208.5V701.5H208.5V701.5H209.5V703.5H210.5V702.5H210.5V706.5H211.5V704.5H212.5V704.5H212.5V703.5H213.5V702.5H214.5V705.5H214.5V707.5H215.5V706.5H216.5V703.5H216.5V710.5H217.5V709.5H218.5V706.5H218.5V706.5H219.5V705.5H220.5V713.5H220.5V706.5H221.5V705.5H222.5V702.5H222.5V711.5H223.5V706.5H224.5V703.5H224.5V703.5H225.5V701.5H226.5V701.5H226.5V708.5H227.5V703.5H228.5V706.5H228.5V707.5H229.5V700.5H230.5V707.5H230.5V708.5H231.5V706.5H232.5V708.5H232.5V701.5H233.5V704.5H234.5V700.5H234.5V703.5H235.5V707.5H236.5V701.5H236.5V707.5H237.5V706.5H238.5V705.5H238.5V705.5H239.5V701.5H240.5V707.5H240.5V704.5H241.5V705.5H242.5V709.5H242.5V709.5H243.5V706.5H244.5V704.5H244.5V704.5H245.5V703.5H246.5V705.5H246.5V706.5H247.5V704.5H248.5V708.5H248.5V709.5H249.5V706.5H250.5V710.5H250.5V707.5H251.5V707.5H252.5V707.5H252.5V705.5H253.5V708.5H254.5V706.5H254.5V711.5H255.5V705.5H256.5V708.5H256.5V704.5H257.5V714.5H258.5V708.5H258.5V704.5H259.5V713.5H260.5V706.5H260.5V705.5H261.5V705.5H262.5V710.5H262.5V704.5H263.5V705.5H264.5V708.5H264.5V703.5H265.5V705.5H266.5V705.5H266.5V707.5H267.5V703.5H268.5V705.5H268.5V701.5H269.5V704.5H270.5V707.5H270.5V706.5H271.5V702.5H272.5V706.5H272.5V704.5H273.5V703.5H274.5V706.5H274.5V713.5H275.5V705.5H276.5V705.5H276.5V705.5H277.5V708.5H278.5V701.5H278.5V706.5H279.5V707.5H280.5V708.5H280.5V704.5H281.5V709.5H282.5V709.5H282.5V699.5H283.5V701.5H284.5V702.5H284.5V701.5H285.5V703.5H286.5V711.5H286.5V701.5H287.5V701.5H288.5V704.5H288.5V712.5H289.5V701.5H290.5V701.5H290.5V707.5H291.5V705.5H292.5V703.5H292.5V706.5H293.5V702.5H294.5V705.5H294.5V703.5H295.5V705.5H296.5V710.5H296.5V709.5H297.5V695.5H298.5V704.5H298.5V701.5H299.5V702.5H300.5V700.5H300.5V704.5H301.5V707.5H302.5V705.5H302.5V712.5H303.5V706.5H304.5V702.5H304.5V713.5H305.5V705.5H306.5V703.5H306.5V701.5H307.5V708.5H308.5V708.5H308.5V712.5H309.5V709.5H310.5V704.5H310.5V699.5H311.5V709.5H312.5V701.5H312.5V704.5H313.5V707.5H314.5V698.5H314.5V714.5H315.5V706.5H316.5V705.5H316.5V698.5H317.5V700.5H318.5V698.5H318.5V705.5H319.5V702.5H320.5V701.5H320.5V704.5H321.5V704.5H322.5V706.5H322.5V707.5H323.5V710.5H324.5V699.5H324.5V707.5H325.5V712.5H326.5V705.5H326.5V706.5H327.5V705.5H328.5V700.5H328.5V706.5H329.5V706.5H330.5V708.5H330.5V706.5H331.5V707.5H332.5V705.5H332.5V695.5H333.5V704.5H334.5V708.5H334.5V699.5H335.5V703.5H336.5V703.5H336.5V703.5H337.5V703.5H338.5V703.5H338.5V701.5H339.5V702.5H340.5V701.5H340.5V707.5H341.5V706.5H342.5V708.5H342.5V702.5H343.5V703.5H344.5V707.5H344.5V704.5H345.5V697.5H346.5V701.5H346.5V709.5H347.5V706.5H348.5V703.5H348.5V706.5H349.5V704.5H350.5V702.5H350.5V705.5H351.5V709.5H352.5V703.5H352.5V706.5H353.5V705.5H354.5V707.5H354.5V710.5H355.5V710.5H356.5V707.5H356.5V709.5H357.5V715.5H358.5V702.5H358.5V709.5H359.5V708.5H360.5V704.5H360.5V714.5H361.5V701.5H362.5V708.5H362.5V703.5H363.5V707.5H364.5V705.5H364.5V705.5H365.5V706.5H366.5V712.5H366.5V711.5H367.5V706.5H368.5V701.5H368.5V707.5H369.5V704.5H370.5V705.5H370.5V704.5H371.5V702.5H372.5V711.5H373.5V705.5H373.5V706.5H374.5V707.5H375.5V709.5H375.5V708.5H376.5V709.5H377.5V709.5H377.5V697.5H378.5V700.5H379.5V706.5H379.5V703.5H380.5V709.5H381.5V715.5H381.5V712.5H382.5V705.5H383.5V701.5H383.5V706.5H384.5V709.5H385.5V707.5H385.5V709.5H386.5V710.5H387.5V706.5H387.5V707.5H388.5V708.5H389.5V709.5H389.5V709.5H390.5V705.5H391.5V701.5H391.5V706.5H392.5V698.5H393.5V711.5H393.5V705.5H394.5V710.5H395.5V706.5H395.5V705.5H396.5V704.5H397.5V702.5H397.5V708.5H398.5V710.5H399.5V706.5H399.5V705.5H400.5V708.5H401.5V703.5H401.5V700.5H402.5V710.5H403.5V705.5H403.5V702.5H404.5V712.5H405.5V705.5H405.5V707.5H406.5V710.5H407.5V701.5H407.5V705.5H408.5V707.5H409.5V704.5H409.5V704.5H410.5V703.5H411.5V704.5H411.5V704.5H412.5V710.5H413.5V707.5H413.5V705.5H414.5V715.5H415.5V699.5H415.5V707.5H416.5V709.5H417.5V712.5H417.5V705.5H418.5V706.5H419.5V708.5H419.5V707.5H420.5V709.5H421.5V708.5H421.5V706.5H422.5V708.5H423.5V704.5H423.5V706.5H424.5V705.5H425.5V704.5H425.5V702.5H426.5V704.5H427.5V705.5H427.5V706.5H428.5V709.5H429.5V707.5H429.5V704.5H430.5V705.5H431.5V707.5H431.5V710.5H432.5V711.5H433.5V705.5H433.5V702.5H434.5V705.5H435.5V710.5H435.5V707.5H436.5V705.5H437.5V709.5H437.5V705.5H438.5V707.5H439.5V709.5H439.5V710.5H440.5V703.5H441.5V705.5H441.5V709.5H442.5V709.5H443.5V703.5H443.5V704.5H444.5V707.5H445.5V701.5H445.5V707.5H446.5V709.5H447.5V702.5H447.5V706.5H448.5V705.5H449.5V706.5H449.5V709.5H450.5V710.5H451.5V707.5H451.5V701.5H452.5V709.5H453.5V701.5H453.5V705.5H454.5V710.5H455.5V705.5H455.5V704.5H456.5V709.5H457.5V713.5H457.5V705.5H458.5V710.5H459.5V704.5H459.5V712.5H460.5V706.5H461.5V709.5H461.5V711.5H462.5V707.5H463.5V705.5H463.5V708.5H464.5V710.5H465.5V705.5H465.5V712.5H466.5V704.5H467.5V704.5H467.5V700.5H468.5V703.5H469.5V705.5H469.5V705.5H470.5V706.5H471.5V710.5H471.5V701.5H472.5V704.5H473.5V707.5H473.5V710.5H474.5V701.5H475.5V704.5H475.5V710.5H476.5V704.5H477.5V700.5H477.5V706.5H478.5V705.5H479.5V707.5H479.5V708.5H480.5V702.5H481.5V696.5H481.5V706.5H482.5V706.5H483.5V703.5H483.5V707.5H484.5V704.5H485.5V703.5H485.5V709.5H486.5V710.5H487.5V706.5H487.5V703.5H488.5V705.5H489.5V702.5H489.5V711.5H490.5V704.5H491.5V708.5H491.5V706.5H492.5V705.5H493.5V709.5H493.5V707.5H494.5V710.5H495.5V705.5H495.5V709.5H496.5V708.5H497.5V705.5H497.5V708.5H498.5V702.5H499.5V708.5H499.5V703.5H500.5V705.5H501.5V709.5H501.5V707.5H502.5V709.5H503.5V707.5H503.5V707.5H504.5V700.5H505.5V707.5H505.5V701.5H506.5V705.5H507.5V710.5H507.5V714.5H508.5V704.5H509.5V713.5H509.5V704.5H510.5V703.5H511.5V705.5H511.5V707.5H512.5V707.5H513.5V705.5H513.5V707.5H514.5V708.5H515.5V707.5H515.5V702.5H516.5V708.5H517.5V705.5H517.5V710.5H518.5V708.5H519.5V711.5H519.5V707.5H520.5V704.5H521.5V705.5H521.5V708.5H522.5V704.5H523.5V707.5H523.5V705.5H524.5V705.5H525.5V704.5H525.5V714.5H526.5V710.5H527.5V703.5H527.5V706.5H528.5V699.5H529.5V707.5H529.5V708.5H530.5V701.5H531.5V704.5H531.5V700.5H532.5V704.5H533.5V707.5H533.5V704.5H534.5V709.5H535.5V708.5H535.5V708.5H536.5V707.5H537.5V704.5H537.5V708.5H538.5V705.5H539.5V708.5H539.5V703.5H540.5V715.5H541.5V707.5H541.5V706.5H542.5V710.5H543.5V703.5H543.5V705.5H544.5V702.5H545.5V703.5H545.5V704.5H546.5V707.5H547.5V710.5H547.5V707.5H548.5V708.5H549.5V705.5H549.5V708.5H550.5V696.5H551.5V711.5H551.5V702.5H552.5V708.5H553.5V707.5H553.5V703.5H554.5V706.5H555.5V710.5H555.5V705.5H556.5V707.5H557.5V713.5H557.5V705.5H558.5V710.5H559.5V709.5H559.5V705.5H560.5V705.5H561.5V707.5H561.5V699.5H562.5V705.5H563.5V708.5H563.5V705.5H564.5V707.5H565.5V713.5H565.5V711.5H566.5V711.5H567.5V699.5H567.5V707.5H568.5V707.5H569.5V708.5H569.5V703.5H570.5V706.5H571.5V701.5H571.5V704.5H572.5V701.5H573.5V707.5H573.5V705.5H574.5V708.5H575.5V707.5H575.5V712.5H576.5V708.5H577.5V709.5H577.5V708.5H578.5V702.5H579.5V705.5H579.5V702.5H580.5V703.5H581.5V703.5H581.5V703.5H582.5V708.5H583.5V704.5H583.5V707.5H584.5V708.5H585.5V702.5H585.5V699.5H586.5V709.5H587.5V700.5H587.5V703.5H588.5V709.5H589.5V705.5H589.5V705.5H590.5V705.5H591.5V707.5H591.5V710.5H592.5V706.5H593.5V703.5H593.5V704.5H594.5V704.5H595.5V703.5H595.5V709.5H596.5V706.5H597.5V705.5H597.5V703.5H598.5V706.5H599.5V705.5H599.5V706.5H600.5V699.5H601.5V713.5H601.5V706.5H602.5V698.5H603.5V705.5H603.5V712.5H604.5V706.5H605.5V711.5H605.5V708.5H606.5V705.5H607.5V701.5H607.5V705.5H608.5V704.5H609.5V703.5H609.5V706.5H610.5V709.5H611.5V707.5H611.5V705.5H612.5V707.5H613.5V708.5H613.5V707.5H614.5V711.5H615.5V710.5H615.5V707.5H616.5V707.5H617.5V706.5H617.5V702.5H618.5V705.5H619.5V706.5H619.5V710.5H620.5V710.5H621.5V705.5H621.5V709.5H622.5V705.5H623.5V710.5H623.5V706.5H624.5V707.5H625.5V703.5H625.5V708.5H626.5V707.5H627.5V705.5H627.5V706.5H628.5V701.5H629.5V707.5H629.5V708.5H630.5V707.5H631.5V705.5H631.5V706.5H632.5V704.5H633.5V711.5H633.5V698.5H634.5V700.5H635.5V706.5H635.5V710.5H636.5V706.5H637.5V705.5H637.5V714.5H638.5V706.5H639.5V711.5H639.5V705.5H640.5V702.5H641.5V703.5H641.5V711.5H642.5V702.5H643.5V703.5H643.5V707.5H644.5V705.5H645.5V701.5H645.5V707.5H646.5V706.5H647.5V708.5H647.5V703.5H648.5V713.5H649.5V702.5H649.5V709.5H650.5V703.5H651.5V712.5H651.5V709.5H652.5V708.5H653.5V704.5H653.5V712.5H654.5V704.5H655.5V708.5H655.5V702.5H656.5V707.5H657.5V705.5H657.5V707.5H658.5V700.5H659.5V708.5H659.5V706.5H660.5V700.5H661.5V706.5H661.5V704.5H662.5V709.5H663.5V706.5H663.5V714.5H664.5V706.5H665.5V708.5H665.5V711.5H666.5V711.5H667.5V703.5H667.5V705.5H668.5V711.5H669.5V700.5H669.5V709.5H670.5V708.5H671.5V706.5H671.5V710.5H672.5V712.5H673.5V709.5H673.5V702.5H674.5V703.5H675.5V712.5H675.5V702.5H676.5V706.5H677.5V705.5H677.5V706.5H678.5V705.5H679.5V710.5H679.5V709.5H680.5V709.5H681.5V708.5H681.5V704.5H682.5V710.5H683.5V701.5H683.5V708.5H684.5V708.5H685.5V704.5H685.5V705.5H686.5V708.5H687.5V710.5H687.5V710.5H688.5V712.5H689.5V703.5H689.5V703.5H690.5V700.5H691.5V705.5H691.5V705.5H692.5V704.5H693.5V703.5H693.5V707.5H694.5V705.5H695.5V699.5H695.5V712.5H696.5V711.5H697.5V710.5H697.5V704.5H698.5V703.5H699.5V708.5H699.5V704.5H700.5V707.5H701.5V705.5H701.5V708.5H702.5V707.5H703.5V706.5H703.5V703.5H704.5V699.5H705.5V712.5H705.5V705.5H706.5V706.5H707.5V703.5H707.5V703.5H708.5V704.5H709.5V704.5H709.5V710.5H710.5V712.5H711.5V701.5H711.5V702.5H712.5V710.5H713.5V702.5H713.5V704.5H714.5V715.5H715.5V704.5H715.5V710.5H716.5V703.5H717.5V709.5H717.5V709.5H718.5V712.5H719.5V707.5H719.5V703.5H720.5V709.5H721.5V713.5H721.5V699.5H722.5V700.5H723.5V704.5H723.5V708.5H724.5V710.5H725.5V712.5H725.5V705.5H726.5V702.5H727.5V710.5H727.5V706.5H728.5V707.5H729.5V707.5H729.5V705.5H730.5V700.5H731.5V709.5H731.5V704.5H732.5V703.5H733.5V707.5H733.5V707.5H734.5V711.5H735.5V703.5H735.5V708.5H736.5V709.5H737.5V706.5H737.5V709.5H738.5V710.5H739.5V707.5H739.5V702.5H740.5V707.5H741.5V705.5H741.5V711.5H742.5V713.5H743.5V701.5H744.5V708.5H744.5V712.5H745.5V707.5H746.5V705.5H746.5V712.5H747.5V709.5H748.5V706.5H748.5V710.5H749.5V704.5H750.5V703.5H750.5V705.5H751.5V708.5H752.5V707.5H752.5V709.5H753.5V707.5H754.5V706.5H754.5V708.5H755.5V703.5H756.5V698.5H756.5V708.5H757.5V705.5H758.5V704.5H758.5V704.5H759.5V707.5H760.5V708.5H760.5V703.5H761.5V705.5H762.5V705.5H762.5V709.5H763.5V704.5H764.5V704.5H764.5V707.5H765.5V704.5H766.5V699.5H766.5V713.5H767.5V705.5H768.5V710.5H768.5V711.5H769.5V707.5H770.5V705.5H770.5V706.5H771.5V710.5H772.5V711.5H772.5V708.5H773.5V707.5H774.5V709.5H774.5V712.5H775.5V701.5H776.5V709.5H776.5V707.5H777.5V708.5H778.5V709.5H778.5V706.5H779.5V708.5H780.5V705.5H780.5V711.5H781.5V712.5H782.5V700.5H782.5V707.5H783.5V704.5H784.5V703.5H784.5V705.5H785.5V706.5H786.5V712.5H786.5V712.5H787.5V703.5H788.5V704.5H788.5V705.5H789.5V712.5H790.5V714.5H790.5V710.5H791.5V711.5H792.5V706.5H792.5V710.5H793.5V701.5H794.5V709.5H794.5V708.5H795.5V704.5H796.5V706.5H796.5V710.5H797.5V704.5H798.5V700.5H798.5V711.5H799.5V707.5H800.5V710.5H800.5V713.5H801.5V705.5H802.5V704.5H802.5V703.5H803.5V705.5H804.5V713.5H804.5V707.5H805.5V709.5H806.5V711.5H806.5V710.5H807.5V704.5H808.5V708.5H808.5V700.5H809.5V705.5H810.5V713.5H810.5V704.5H811.5V703.5H812.5V707.5H812.5V711.5H813.5V701.5H814.5V711.5H814.5V707.5H815.5V713.5H816.5V711.5H816.5V712.5H817.5V703.5H818.5V703.5H818.5V708.5H819.5V711.5H820.5V707.5H820.5V705.5H821.5V712.5H822.5V711.5H822.5V707.5H823.5V704.5H824.5V706.5H824.5V705.5H825.5V711.5H826.5V715.5H826.5V706.5H827.5V710.5H828.5V707.5H828.5V708.5H829.5V705.5H830.5V709.5H830.5V702.5H831.5V707.5H832.5V705.5H832.5V705.5H833.5V703.5H834.5V705.5H834.5V713.5H835.5V709.5H836.5V701.5H836.5V705.5H837.5V705.5H838.5V705.5H838.5V709.5H839.5V709.5H840.5V709.5H840.5V703.5H841.5V706.5H842.5V701.5H842.5V705.5H843.5V700.5H844.5V723.5H844.5V726.5H845.5V715.5H846.5V718.5H846.5V714.5H847.5V716.5H848.5V717.5H848.5V714.5H849.5V718.5H850.5V717.5H850.5V715.5H851.5V714.5H852.5V716.5H852.5V711.5H853.5V709.5H854.5V703.5H854.5V704.5H855.5V710.5H856.5V706.5H856.5V710.5H857.5V707.5H858.5V709.5H858.5V710.5H859.5V708.5H860.5V713.5H860.5V706.5H861.5V709.5H862.5V711.5H862.5V709.5H863.5V706.5H864.5V710.5H864.5V706.5H865.5V705.5H866.5V702.5H866.5V711.5H867.5V708.5H868.5V705.5H868.5V702.5H869.5V706.5H870.5V704.5H870.5V712.5H871.5V709.5H872.5V701.5H872.5V708.5H873.5V700.5H874.5V709.5H874.5V708.5H875.5V712.5H876.5V705.5H876.5V706.5H877.5V700.5H878.5V706.5H878.5V708.5H879.5V712.5H880.5V707.5H880.5V704.5H881.5V704.5H882.5V703.5H882.5V704.5H883.5V707.5H884.5V705.5H884.5V706.5H885.5V711.5H886.5V701.5H886.5V706.5H887.5V710.5H888.5V706.5H888.5V706.5H889.5V703.5H890.5V702.5H890.5V717.5H891.5V705.5H892.5V702.5H892.5V710.5H893.5V713.5H894.5V706.5H894.5V768.5H895.5V706.5H896.5V711.5H896.5V708.5H897.5V706.5H898.5V704.5H898.5V699.5H899.5V706.5H900.5V709.5H900.5V715.5H901.5V703.5H902.5V707.5H902.5V707.5H903.5V710.5H904.5V704.5H904.5V713.5H905.5V707.5H906.5V706.5H906.5V706.5H907.5V702.5H908.5V707.5H908.5V707.5H909.5V704.5H910.5V712.5H910.5V708.5H911.5V707.5H912.5V704.5H912.5V710.5H913.5V704.5H914.5V706.5H914.5V712.5H915.5V712.5H916.5V712.5H916.5V706.5H917.5V706.5H918.5V704.5H918.5V704.5H919.5V709.5H920.5V703.5H920.5V704.5H921.5V705.5H922.5V705.5H922.5V711.5H923.5V706.5H924.5V710.5H924.5V711.5H925.5V708.5H926.5V706.5H926.5V707.5H927.5V708.5H928.5V710.5H928.5V706.5" fill="none" stroke="#fbf420" stroke-width="1" stroke-linecap="square"/>
<text x="66" y="772.5" text-anchor="end" shape-rendering="auto">0</text>
<text x="66" y="741.5" text-anchor="end" shape-rendering="auto">5</text>
<text x="66" y="710.5" text-anchor="end" shape-rendering="auto">10</text>
<text x="66" y="679.5" text-anchor="end" shape-rendering="auto">15</text>
<text x="66" y="648.5" text-anchor="end" shape-rendering="auto">20</text>
<path d="M82.5 771v3M88.5 771v3M95.5 771v3M102.5 771v3M108.5 771v3M115.5 771v3M122.5 771v3M128.5 771v3M135.5 771v3M142.5 771v3M148.5 771v3M155.5 771v3M167.5 771v3M174.5 771v3M180.5 771v3M187.5 771v3M194.5 771v3M200.5 771v3M207.5 771v3M214.5 771v3M220.5 771v3M227.5 771v3M234.5 771v3M240.5 771v3M252.5 771v3M259.5 771v3M266.5 771v3M272.5 771v3M279.5 771v3M286.5 771v3M292.5 771v3M299.5 771v3M306.5 771v3M312.5 771v3M319.5 771v3M326.5 771v3M338.5 771v3M344.5 771v3M351.5 771v3M358.5 771v3M364.5 771v3M371.5 771v3M378.5 771v3M385.5 771v3M391.5 771v3M398.5 771v3M405.5 771v3M411.5 771v3M423.5 771v3M430.5 771v3M437.5 771v3M443.5 771v3M450.5 771v3M457.5 771v3M463.5 771v3M470.5 771v3M477.5 771v3M483.5 771v3M490.5 771v3M497.5 771v3M509.5 771v3M515.5 771v3M522.5 771v3M529.5 771v3M535.5 771v3M542.5 771v3M549.5 771v3M555.5 771v3M562.5 771v3M569.5 771v3M575.5 771v3M582.5 771v3M594.5 771v3M601.5 771v3M607.5 771v3M614.5 771v3M621.5 771v3M627.5 771v3M634.5 771v3M641.5 771v3M647.5 771v3M654.5 771v3M661.5 771v3M667.5 771v3M679.5 771v3M686.5 771v3M693.5 771v3M699.5 771v3M706.5 771v3M713.5 771v3M719.5 771v3M726.5 771v3M733.5 771v3M739.5 771v3M746.5 771v3M753.5 771v3M765.5 771v3M772.5 771v3M778.5 771v3M785.5 771v3M792.5 771v3M798.5 771v3M805.5 771v3M812.5 771v3M818.5 771v3M825.5 771v3M832.5 771v3M838.5 771v3M850.5 771v3M857.5 771v3M864.5 771v3M870.5 771v3M877.5 771v3M884.5 771v3M890.5 771v3M897.5 771v3M904.5 771v3M910.5 771v3M917.5 771v3M924.5 771v3M75.5 771v5M160.5 771v5M246.5 771v5M331.5 771v5M417.5 771v5M502.5 771v5M587.5 771v5M673.5 771v5M758.5 771v5M844.5 771v5M929.5 771v5M69 768.5h5M69 737.5h5M69 706.5h5M69 675.5h5M69 644.5h5" stroke="#000" stroke-width="1" fill="none"/>
<text x="74.7" y="787" text-anchor="middle">0</text>
<text x="159.7" y="787" text-anchor="middle">128</text>
<text x="245.7" y="787" text-anchor="middle">256</text>
<text x="330.7" y="787" text-anchor="middle">384</text>
<text x="416.7" y="787" text-anchor="middle">512</text>
<text x="501.7" y="787" text-anchor="middle">640</text>
<text x="586.7" y="787" text-anchor="middle">768</text>
<text x="672.7" y="787" text-anchor="middle">896</text>
<text x="757.7" y="787" text-anchor="middle">1024</text>
<text x="843.7" y="787" text-anchor="middle">1152</text>
<text x="928.7" y="787" text-anchor="middle">1280</text>
<text transform="translate(48,706.5) rotate(-90)" text-anchor="middle">Output noise (mV) @ 2fC</text>
</svg>
<div class="chart" style="left:34px;top:793px;width:920px;height:160px"></div>
<div style="left:34px;top:793px;width:920px;height:2px;background:linear-gradient(to right,#dcdcdc 0,#d8d8d8 900px,#b0b0b0 920px)"></div>
<div style="left:34px;top:951px;width:920px;height:2px;background:linear-gradient(to bottom,#b4b4b4,#969696)"></div>
<svg style="left:0;top:0" width="1051" height="1018" viewBox="0 0 1051 1018" shape-rendering="crispEdges" font-family="Liberation Sans, sans-serif" font-size="11">
<rect x="80" y="804" width="850" height="125" fill="#000"/>
<path d="M166.5 804V929M251.5 804V929M335.5 804V929M420.5 804V929M505.5 804V929M590.5 804V929M675.5 804V929M759.5 804V929M844.5 804V929" stroke="#08f408" stroke-width="1" fill="none"/>
<path d="M81.5 837.5H82.5V839.5H82.5V831.5H83.5V824.5H84.5V832.5H84.5V835.5H85.5V823.5H86.5V821.5H86.5V830.5H87.5V829.5H88.5V827.5H88.5V814.5H89.5V827.5H90.5V823.5H90.5V826.5H91.5V837.5H92.5V833.5H92.5V834.5H93.5V826.5H93.5V827.5H94.5V819.5H95.5V829.5H95.5V827.5H96.5V828.5H97.5V827.5H97.5V817.5H98.5V827.5H99.5V821.5H99.5V822.5H100.5V831.5H101.5V825.5H101.5V831.5H102.5V828.5H103.5V828.5H103.5V829.5H104.5V831.5H105.5V822.5H105.5V831.5H106.5V826.5H107.5V821.5H107.5V827.5H108.5V825.5H109.5V823.5H109.5V825.5H110.5V822.5H111.5V837.5H111.5V821.5H112.5V830.5H113.5V839.5H113.5V833.5H114.5V837.5H115.5V831.5H115.5V838.5H116.5V835.5H117.5V829.5H117.5V830.5H118.5V835.5H119.5V832.5H119.5V831.5H120.5V831.5H121.5V831.5H121.5V832.5H122.5V827.5H123.5V839.5H123.5V834.5H124.5V831.5H125.5V833.5H125.5V834.5H126.5V834.5H127.5V831.5H127.5V826.5H128.5V833.5H129.5V833.5H129.5V830.5H130.5V833.5H131.5V841.5H131.5V831.5H132.5V834.5H133.5V835.5H133.5V829.5H134.5V832.5H135.5V835.5H135.5V843.5H136.5V841.5H137.5V833.5H137.5V833.5H138.5V831.5H139.5V832.5H139.5V835.5H140.5V839.5H141.5V838.5H141.5V834.5H142.5V839.5H143.5V830.5H143.5V840.5H144.5V842.5H145.5V834.5H145.5V842.5H146.5V826.5H146.5V838.5H147.5V834.5H148.5V835.5H148.5V838.5H149.5V842.5H150.5V843.5H150.5V830.5H151.5V829.5H152.5V823.5H152.5V841.5H153.5V831.5H154.5V834.5H154.5V830.5H155.5V836.5H156.5V831.5H156.5V830.5H157.5V831.5H158.5V827.5H158.5V835.5H159.5V827.5H160.5V838.5H160.5V826.5H161.5V848.5H162.5V834.5H162.5V838.5H163.5V834.5H164.5V830.5H164.5V831.5H165.5V834.5H166.5V826.5H166.5V842.5H167.5V839.5H168.5V827.5H168.5V833.5H169.5V845.5H170.5V833.5H170.5V841.5H171.5V828.5H172.5V829.5H172.5V838.5H173.5V829.5H174.5V839.5H174.5V831.5H175.5V832.5H176.5V836.5H176.5V842.5H177.5V837.5H178.5V846.5H178.5V838.5H179.5V844.5H180.5V829.5H180.5V840.5H181.5V847.5H182.5V833.5H182.5V834.5H183.5V838.5H184.5V825.5H184.5V832.5H185.5V835.5H186.5V839.5H186.5V850.5H187.5V833.5H188.5V831.5H188.5V839.5H189.5V842.5H190.5V836.5H190.5V844.5H191.5V836.5H192.5V832.5H192.5V829.5H193.5V835.5H194.5V835.5H194.5V832.5H195.5V829.5H196.5V837.5H196.5V842.5H197.5V840.5H198.5V842.5H198.5V840.5H199.5V837.5H200.5V834.5H200.5V835.5H201.5V836.5H201.5V838.5H202.5V834.5H203.5V832.5H203.5V833.5H204.5V829.5H205.5V838.5H205.5V837.5H206.5V828.5H207.5V835.5H207.5V834.5H208.5V838.5H209.5V832.5H209.5V838.5H210.5V841.5H211.5V837.5H211.5V839.5H212.5V832.5H213.5V838.5H213.5V836.5H214.5V838.5H215.5V835.5H215.5V840.5H216.5V831.5H217.5V843.5H217.5V838.5H218.5V840.5H219.5V833.5H219.5V836.5H220.5V834.5H221.5V838.5H221.5V840.5H222.5V842.5H223.5V838.5H223.5V839.5H224.5V835.5H225.5V835.5H225.5V832.5H226.5V837.5H227.5V840.5H227.5V842.5H228.5V837.5H229.5V835.5H229.5V827.5H230.5V836.5H231.5V828.5H231.5V828.5H232.5V842.5H233.5V831.5H233.5V831.5H234.5V830.5H235.5V837.5H235.5V832.5H236.5V839.5H237.5V837.5H237.5V837.5H238.5V828.5H239.5V838.5H239.5V832.5H240.5V837.5H241.5V840.5H241.5V836.5H242.5V834.5H243.5V841.5H243.5V834.5H244.5V841.5H245.5V841.5H245.5V836.5H246.5V838.5H247.5V842.5H247.5V845.5H248.5V837.5H249.5V836.5H249.5V839.5H250.5V836.5H251.5V845.5H251.5V835.5H252.5V835.5H253.5V836.5H253.5V840.5H254.5V837.5H254.5V837.5H255.5V832.5H256.5V836.5H256.5V836.5H257.5V841.5H258.5V833.5H258.5V832.5H259.5V840.5H260.5V834.5H260.5V836.5H261.5V838.5H262.5V844.5H262.5V829.5H263.5V846.5H264.5V836.5H264.5V839.5H265.5V832.5H266.5V839.5H266.5V837.5H267.5V835.5H268.5V835.5H268.5V840.5H269.5V834.5H270.5V836.5H270.5V833.5H271.5V840.5H272.5V838.5H272.5V839.5H273.5V842.5H274.5V836.5H274.5V836.5H275.5V831.5H276.5V839.5H276.5V836.5H277.5V832.5H278.5V838.5H278.5V837.5H279.5V837.5H280.5V841.5H280.5V842.5H281.5V832.5H282.5V837.5H282.5V838.5H283.5V844.5H284.5V837.5H284.5V832.5H285.5V843.5H286.5V842.5H286.5V832.5H287.5V831.5H288.5V830.5H288.5V840.5H289.5V835.5H290.5V841.5H290.5V835.5H291.5V839.5H292.5V837.5H292.5V831.5H293.5V836.5H294.5V839.5H294.5V837.5H295.5V836.5H296.5V840.5H296.5V837.5H297.5V835.5H298.5V830.5H298.5V848.5H299.5V843.5H300.5V844.5H300.5V834.5H301.5V826.5H302.5V837.5H302.5V837.5H303.5V832.5H304.5V850.5H304.5V839.5H305.5V853.5H306.5V837.5H306.5V840.5H307.5V840.5H308.5V836.5H308.5V841.5H309.5V833.5H309.5V838.5H310.5V836.5H311.5V826.5H311.5V840.5H312.5V833.5H313.5V842.5H313.5V832.5H314.5V833.5H315.5V837.5H315.5V833.5H316.5V830.5H317.5V831.5H317.5V838.5H318.5V838.5H319.5V833.5H319.5V845.5H320.5V841.5H321.5V836.5H321.5V835.5H322.5V829.5H323.5V830.5H323.5V836.5H324.5V836.5H325.5V844.5H325.5V839.5H326.5V837.5H327.5V839.5H327.5V838.5H328.5V835.5H329.5V843.5H329.5V841.5H330.5V847.5H331.5V833.5H331.5V843.5H332.5V846.5H333.5V834.5H333.5V839.5H334.5V833.5H335.5V840.5H335.5V828.5H336.5V835.5H337.5V837.5H337.5V838.5H338.5V839.5H339.5V834.5H339.5V829.5H340.5V840.5H341.5V843.5H341.5V835.5H342.5V833.5H343.5V845.5H343.5V841.5H344.5V843.5H345.5V835.5H345.5V836.5H346.5V842.5H347.5V844.5H347.5V835.5H348.5V848.5H349.5V835.5H349.5V839.5H350.5V829.5H351.5V833.5H351.5V841.5H352.5V839.5H353.5V840.5H353.5V842.5H354.5V838.5H355.5V834.5H355.5V845.5H356.5V839.5H357.5V831.5H357.5V835.5H358.5V842.5H359.5V842.5H359.5V842.5H360.5V846.5H361.5V833.5H361.5V838.5H362.5V842.5H362.5V845.5H363.5V840.5H364.5V841.5H364.5V830.5H365.5V840.5H366.5V838.5H366.5V833.5H367.5V835.5H368.5V839.5H368.5V849.5H369.5V832.5H370.5V835.5H370.5V840.5H371.5V839.5H372.5V843.5H372.5V843.5H373.5V845.5H374.5V836.5H374.5V836.5H375.5V837.5H376.5V835.5H376.5V836.5H377.5V838.5H378.5V842.5H378.5V836.5H379.5V833.5H380.5V835.5H380.5V832.5H381.5V841.5H382.5V843.5H382.5V832.5H383.5V841.5H384.5V837.5H384.5V839.5H385.5V838.5H386.5V840.5H386.5V841.5H387.5V847.5H388.5V829.5H388.5V837.5H389.5V847.5H390.5V843.5H390.5V844.5H391.5V842.5H392.5V850.5H392.5V836.5H393.5V831.5H394.5V840.5H394.5V835.5H395.5V836.5H396.5V844.5H396.5V833.5H397.5V846.5H398.5V841.5H398.5V840.5H399.5V833.5H400.5V838.5H400.5V839.5H401.5V842.5H402.5V838.5H402.5V838.5H403.5V835.5H404.5V832.5H404.5V835.5H405.5V838.5H406.5V839.5H406.5V831.5H407.5V838.5H408.5V839.5H408.5V830.5H409.5V831.5H410.5V836.5H410.5V839.5H411.5V841.5H412.5V833.5H412.5V841.5H413.5V834.5H414.5V842.5H414.5V838.5H415.5V837.5H416.5V838.5H416.5V837.5H417.5V837.5H417.5V844.5H418.5V844.5H419.5V839.5H419.5V830.5H420.5V839.5H421.5V843.5H421.5V842.5H422.5V838.5H423.5V833.5H423.5V841.5H424.5V836.5H425.5V838.5H425.5V840.5H426.5V843.5H427.5V839.5H427.5V842.5H428.5V836.5H429.5V847.5H429.5V833.5H430.5V835.5H431.5V836.5H431.5V832.5H432.5V836.5H433.5V847.5H433.5V838.5H434.5V836.5H435.5V842.5H435.5V844.5H436.5V837.5H437.5V836.5H437.5V841.5H438.5V840.5H439.5V841.5H439.5V841.5H440.5V839.5H441.5V834.5H441.5V846.5H442.5V840.5H443.5V831.5H443.5V837.5H444.5V838.5H445.5V835.5H445.5V843.5H446.5V844.5H447.5V846.5H447.5V845.5H448.5V837.5H449.5V835.5H449.5V841.5H450.5V842.5H451.5V837.5H451.5V836.5H452.5V837.5H453.5V848.5H453.5V841.5H454.5V851.5H455.5V838.5H455.5V843.5H456.5V842.5H457.5V832.5H457.5V832.5H458.5V836.5H459.5V837.5H459.5V838.5H460.5V841.5H461.5V839.5H461.5V830.5H462.5V843.5H463.5V842.5H463.5V838.5H464.5V835.5H465.5V835.5H465.5V843.5H466.5V839.5H467.5V840.5H467.5V844.5H468.5V838.5H469.5V841.5H469.5V834.5H470.5V837.5H470.5V842.5H471.5V838.5H472.5V840.5H472.5V842.5H473.5V841.5H474.5V834.5H474.5V841.5H475.5V847.5H476.5V842.5H476.5V835.5H477.5V829.5H478.5V844.5H478.5V840.5H479.5V840.5H480.5V845.5H480.5V837.5H481.5V839.5H482.5V837.5H482.5V828.5H483.5V840.5H484.5V835.5H484.5V835.5H485.5V842.5H486.5V842.5H486.5V832.5H487.5V835.5H488.5V838.5H488.5V844.5H489.5V835.5H490.5V836.5H490.5V829.5H491.5V832.5H492.5V835.5H492.5V838.5H493.5V839.5H494.5V841.5H494.5V837.5H495.5V838.5H496.5V836.5H496.5V834.5H497.5V837.5H498.5V841.5H498.5V835.5H499.5V832.5H500.5V843.5H500.5V837.5H501.5V836.5H502.5V836.5H502.5V836.5H503.5V839.5H504.5V839.5H504.5V831.5H505.5V831.5H506.5V845.5H506.5V851.5H507.5V837.5H508.5V842.5H508.5V841.5H509.5V846.5H510.5V837.5H510.5V839.5H511.5V841.5H512.5V835.5H512.5V828.5H513.5V832.5H514.5V833.5H514.5V841.5H515.5V836.5H516.5V839.5H516.5V834.5H517.5V836.5H518.5V839.5H518.5V836.5H519.5V842.5H520.5V835.5H520.5V832.5H521.5V841.5H522.5V836.5H522.5V847.5H523.5V835.5H524.5V835.5H524.5V844.5H525.5V831.5H525.5V838.5H526.5V847.5H527.5V845.5H527.5V835.5H528.5V840.5H529.5V834.5H529.5V846.5H530.5V839.5H531.5V834.5H531.5V842.5H532.5V836.5H533.5V841.5H533.5V837.5H534.5V837.5H535.5V829.5H535.5V845.5H536.5V835.5H537.5V833.5H537.5V844.5H538.5V839.5H539.5V828.5H539.5V834.5H540.5V853.5H541.5V840.5H541.5V847.5H542.5V838.5H543.5V842.5H543.5V842.5H544.5V843.5H545.5V838.5H545.5V841.5H546.5V843.5H547.5V840.5H547.5V837.5H548.5V843.5H549.5V834.5H549.5V847.5H550.5V837.5H551.5V841.5H551.5V832.5H552.5V842.5H553.5V842.5H553.5V845.5H554.5V830.5H555.5V836.5H555.5V844.5H556.5V841.5H557.5V844.5H557.5V832.5H558.5V837.5H559.5V849.5H559.5V838.5H560.5V835.5H561.5V839.5H561.5V837.5H562.5V840.5H563.5V838.5H563.5V838.5H564.5V842.5H565.5V837.5H565.5V838.5H566.5V839.5H567.5V842.5H567.5V844.5H568.5V838.5H569.5V835.5H569.5V850.5H570.5V842.5H571.5V833.5H571.5V835.5H572.5V842.5H573.5V833.5H573.5V844.5H574.5V843.5H575.5V830.5H575.5V841.5H576.5V840.5H577.5V847.5H577.5V844.5H578.5V845.5H578.5V840.5H579.5V848.5H580.5V834.5H580.5V841.5H581.5V842.5H582.5V842.5H582.5V836.5H583.5V832.5H584.5V841.5H584.5V832.5H585.5V832.5H586.5V833.5H586.5V838.5H587.5V846.5H588.5V836.5H588.5V841.5H589.5V838.5H590.5V848.5H590.5V841.5H591.5V838.5H592.5V844.5H592.5V838.5H593.5V831.5H594.5V838.5H594.5V842.5H595.5V828.5H596.5V849.5H596.5V844.5H597.5V837.5H598.5V842.5H598.5V850.5H599.5V838.5H600.5V835.5H600.5V843.5H601.5V832.5H602.5V837.5H602.5V834.5H603.5V846.5H604.5V839.5H604.5V832.5H605.5V830.5H606.5V833.5H606.5V839.5H607.5V838.5H608.5V842.5H608.5V834.5H609.5V843.5H610.5V839.5H610.5V849.5H611.5V846.5H612.5V831.5H612.5V839.5H613.5V838.5H614.5V850.5H614.5V839.5H615.5V830.5H616.5V846.5H616.5V850.5H617.5V840.5H618.5V842.5H618.5V840.5H619.5V845.5H620.5V846.5H620.5V845.5H621.5V836.5H622.5V840.5H622.5V835.5H623.5V844.5H624.5V837.5H624.5V841.5H625.5V839.5H626.5V835.5H626.5V839.5H627.5V841.5H628.5V847.5H628.5V839.5H629.5V836.5H630.5V842.5H630.5V840.5H631.5V848.5H632.5V846.5H632.5V837.5H633.5V833.5H633.5V841.5H634.5V847.5H635.5V841.5H635.5V847.5H636.5V841.5H637.5V830.5H637.5V838.5H638.5V840.5H639.5V834.5H639.5V841.5H640.5V838.5H641.5V838.5H641.5V837.5H642.5V846.5H643.5V836.5H643.5V835.5H644.5V850.5H645.5V852.5H645.5V844.5H646.5V832.5H647.5V839.5H647.5V836.5H648.5V837.5H649.5V835.5H649.5V842.5H650.5V842.5H651.5V838.5H651.5V837.5H652.5V837.5H653.5V838.5H653.5V842.5H654.5V834.5H655.5V837.5H655.5V834.5H656.5V851.5H657.5V835.5H657.5V851.5H658.5V838.5H659.5V843.5H659.5V839.5H660.5V842.5H661.5V841.5H661.5V839.5H662.5V838.5H663.5V843.5H663.5V851.5H664.5V843.5H665.5V837.5H665.5V843.5H666.5V837.5H667.5V841.5H667.5V844.5H668.5V834.5H669.5V832.5H669.5V840.5H670.5V840.5H671.5V835.5H671.5V846.5H672.5V844.5H673.5V834.5H673.5V835.5H674.5V842.5H675.5V843.5H675.5V838.5H676.5V846.5H677.5V842.5H677.5V841.5H678.5V851.5H679.5V837.5H679.5V836.5H680.5V834.5H681.5V846.5H681.5V846.5H682.5V843.5H683.5V846.5H683.5V830.5H684.5V844.5H685.5V841.5H685.5V839.5H686.5V837.5H686.5V833.5H687.5V845.5H688.5V835.5H688.5V839.5H689.5V845.5H690.5V839.5H690.5V846.5H691.5V832.5H692.5V843.5H692.5V835.5H693.5V833.5H694.5V843.5H694.5V844.5H695.5V839.5H696.5V845.5H696.5V835.5H697.5V839.5H698.5V843.5H698.5V843.5H699.5V836.5H700.5V847.5H700.5V832.5H701.5V843.5H702.5V841.5H702.5V844.5H703.5V832.5H704.5V836.5H704.5V833.5H705.5V836.5H706.5V839.5H706.5V832.5H707.5V836.5H708.5V838.5H708.5V837.5H709.5V836.5H710.5V838.5H710.5V840.5H711.5V847.5H712.5V830.5H712.5V846.5H713.5V850.5H714.5V843.5H714.5V830.5H715.5V834.5H716.5V843.5H716.5V838.5H717.5V840.5H718.5V849.5H718.5V841.5H719.5V838.5H720.5V834.5H720.5V845.5H721.5V850.5H722.5V847.5H722.5V838.5H723.5V839.5H724.5V839.5H724.5V839.5H725.5V841.5H726.5V846.5H726.5V838.5H727.5V838.5H728.5V837.5H728.5V834.5H729.5V846.5H730.5V851.5H730.5V848.5H731.5V829.5H732.5V844.5H732.5V838.5H733.5V840.5H734.5V836.5H734.5V824.5H735.5V842.5H736.5V841.5H736.5V843.5H737.5V839.5H738.5V837.5H738.5V844.5H739.5V833.5H740.5V834.5H740.5V838.5H741.5V840.5H741.5V841.5H742.5V848.5H743.5V837.5H743.5V844.5H744.5V842.5H745.5V835.5H745.5V844.5H746.5V842.5H747.5V836.5H747.5V831.5H748.5V843.5H749.5V834.5H749.5V843.5H750.5V838.5H751.5V837.5H751.5V845.5H752.5V835.5H753.5V831.5H753.5V840.5H754.5V838.5H755.5V845.5H755.5V831.5H756.5V839.5H757.5V846.5H757.5V836.5H758.5V847.5H759.5V843.5H759.5V850.5H760.5V833.5H761.5V829.5H761.5V843.5H762.5V843.5H763.5V843.5H763.5V843.5H764.5V837.5H765.5V833.5H765.5V845.5H766.5V838.5H767.5V848.5H767.5V833.5H768.5V840.5H769.5V843.5H769.5V832.5H770.5V840.5H771.5V833.5H771.5V835.5H772.5V832.5H773.5V844.5H773.5V840.5H774.5V838.5H775.5V841.5H775.5V833.5H776.5V843.5H777.5V835.5H777.5V833.5H778.5V849.5H779.5V845.5H779.5V844.5H780.5V843.5H781.5V838.5H781.5V841.5H782.5V840.5H783.5V842.5H783.5V840.5H784.5V838.5H785.5V836.5H785.5V844.5H786.5V840.5H787.5V844.5H787.5V841.5H788.5V847.5H789.5V835.5H789.5V837.5H790.5V841.5H791.5V843.5H791.5V842.5H792.5V843.5H793.5V847.5H793.5V832.5H794.5V824.5H794.5V846.5H795.5V846.5H796.5V837.5H796.5V837.5H797.5V848.5H798.5V849.5H798.5V837.5H799.5V850.5H800.5V833.5H800.5V842.5H801.5V840.5H802.5V840.5H802.5V843.5H803.5V841.5H804.5V841.5H804.5V834.5H805.5V840.5H806.5V840.5H806.5V843.5H807.5V843.5H808.5V844.5H808.5V840.5H809.5V831.5H810.5V835.5H810.5V839.5H811.5V832.5H812.5V835.5H812.5V839.5H813.5V841.5H814.5V845.5H814.5V839.5H815.5V842.5H816.5V848.5H816.5V846.5H817.5V831.5H818.5V839.5H818.5V838.5H819.5V839.5H820.5V842.5H820.5V838.5H821.5V835.5H822.5V842.5H822.5V838.5H823.5V835.5H824.5V842.5H824.5V839.5H825.5V844.5H826.5V837.5H826.5V842.5H827.5V835.5H828.5V844.5H828.5V832.5H829.5V842.5H830.5V844.5H830.5V844.5H831.5V837.5H832.5V844.5H832.5V831.5H833.5V834.5H834.5V838.5H834.5V847.5H835.5V840.5H836.5V844.5H836.5V849.5H837.5V838.5H838.5V830.5H838.5V843.5H839.5V836.5H840.5V834.5H840.5V845.5H841.5V842.5H842.5V839.5H842.5V838.5H843.5V846.5H844.5V839.5H844.5V870.5H845.5V862.5H846.5V871.5H846.5V864.5H847.5V861.5H848.5V859.5H848.5V852.5H849.5V857.5H849.5V839.5H850.5V854.5H851.5V846.5H851.5V844.5H852.5V843.5H853.5V848.5H853.5V850.5H854.5V847.5H855.5V842.5H855.5V844.5H856.5V841.5H857.5V841.5H857.5V848.5H858.5V848.5H859.5V836.5H859.5V845.5H860.5V850.5H861.5V833.5H861.5V846.5H862.5V846.5H863.5V837.5H863.5V847.5H864.5V845.5H865.5V836.5H865.5V845.5H866.5V829.5H867.5V840.5H867.5V828.5H868.5V840.5H869.5V840.5H869.5V844.5H870.5V842.5H871.5V843.5H871.5V841.5H872.5V837.5H873.5V847.5H873.5V845.5H874.5V850.5H875.5V833.5H875.5V841.5H876.5V840.5H877.5V841.5H877.5V835.5H878.5V839.5H879.5V836.5H879.5V841.5H880.5V841.5H881.5V841.5H881.5V849.5H882.5V835.5H883.5V848.5H883.5V845.5H884.5V837.5H885.5V840.5H885.5V836.5H886.5V832.5H887.5V831.5H887.5V834.5H888.5V841.5H889.5V830.5H889.5V845.5H890.5V841.5H891.5V835.5H891.5V841.5H892.5V841.5H893.5V842.5H893.5V834.5H894.5V852.5H895.5V928.5H895.5V835.5H896.5V841.5H897.5V838.5H897.5V845.5H898.5V835.5H899.5V826.5H899.5V845.5H900.5V834.5H901.5V841.5H901.5V842.5H902.5V843.5H902.5V841.5H903.5V846.5H904.5V847.5H904.5V832.5H905.5V840.5H906.5V838.5H906.5V839.5H907.5V838.5H908.5V848.5H908.5V845.5H909.5V837.5H910.5V836.5H910.5V846.5H911.5V843.5H912.5V845.5H912.5V837.5H913.5V839.5H914.5V840.5H914.5V843.5H915.5V839.5H916.5V840.5H916.5V844.5H917.5V839.5H918.5V844.5H918.5V836.5H919.5V837.5H920.5V844.5H920.5V838.5H921.5V840.5H922.5V844.5H922.5V845.5H923.5V848.5H924.5V846.5H924.5V839.5H925.5V835.5H926.5V843.5H926.5V840.5H927.5V839.5H928.5V837.5H928.5V838.5" fill="none" stroke="#ff0c14" stroke-width="1" stroke-linecap="square"/>
<text x="71" y="932.5" text-anchor="end" shape-rendering="auto">0</text>
<text x="71" y="901.5" text-anchor="end" shape-rendering="auto">200</text>
<text x="71" y="870.5" text-anchor="end" shape-rendering="auto">400</text>
<text x="71" y="839.5" text-anchor="end" shape-rendering="auto">600</text>
<text x="71" y="808.5" text-anchor="end" shape-rendering="auto">800</text>
<path d="M88.5 931v3M94.5 931v3M101.5 931v3M107.5 931v3M114.5 931v3M121.5 931v3M127.5 931v3M134.5 931v3M141.5 931v3M147.5 931v3M154.5 931v3M160.5 931v3M172.5 931v3M179.5 931v3M186.5 931v3M192.5 931v3M199.5 931v3M205.5 931v3M212.5 931v3M219.5 931v3M225.5 931v3M232.5 931v3M239.5 931v3M245.5 931v3M257.5 931v3M264.5 931v3M270.5 931v3M277.5 931v3M284.5 931v3M290.5 931v3M297.5 931v3M304.5 931v3M310.5 931v3M317.5 931v3M323.5 931v3M330.5 931v3M342.5 931v3M349.5 931v3M355.5 931v3M362.5 931v3M368.5 931v3M375.5 931v3M382.5 931v3M388.5 931v3M395.5 931v3M402.5 931v3M408.5 931v3M415.5 931v3M427.5 931v3M433.5 931v3M440.5 931v3M447.5 931v3M453.5 931v3M460.5 931v3M467.5 931v3M473.5 931v3M480.5 931v3M486.5 931v3M493.5 931v3M500.5 931v3M512.5 931v3M518.5 931v3M525.5 931v3M531.5 931v3M538.5 931v3M545.5 931v3M551.5 931v3M558.5 931v3M565.5 931v3M571.5 931v3M578.5 931v3M584.5 931v3M596.5 931v3M603.5 931v3M610.5 931v3M616.5 931v3M623.5 931v3M630.5 931v3M636.5 931v3M643.5 931v3M649.5 931v3M656.5 931v3M663.5 931v3M669.5 931v3M681.5 931v3M688.5 931v3M694.5 931v3M701.5 931v3M708.5 931v3M714.5 931v3M721.5 931v3M728.5 931v3M734.5 931v3M741.5 931v3M747.5 931v3M754.5 931v3M766.5 931v3M773.5 931v3M779.5 931v3M786.5 931v3M793.5 931v3M799.5 931v3M806.5 931v3M812.5 931v3M819.5 931v3M826.5 931v3M832.5 931v3M839.5 931v3M851.5 931v3M857.5 931v3M864.5 931v3M871.5 931v3M877.5 931v3M884.5 931v3M891.5 931v3M897.5 931v3M904.5 931v3M910.5 931v3M917.5 931v3M924.5 931v3M81.5 931v5M166.5 931v5M251.5 931v5M335.5 931v5M420.5 931v5M505.5 931v5M590.5 931v5M675.5 931v5M759.5 931v5M844.5 931v5M929.5 931v5M74 928.5h5M74 897.5h5M74 866.5h5M74 835.5h5M74 804.5h5" stroke="#000" stroke-width="1" fill="none"/>
<text x="80.7" y="947" text-anchor="middle">0</text>
<text x="165.7" y="947" text-anchor="middle">128</text>
<text x="250.7" y="947" text-anchor="middle">256</text>
<text x="334.7" y="947" text-anchor="middle">384</text>
<text x="419.7" y="947" text-anchor="middle">512</text>
<text x="504.7" y="947" text-anchor="middle">640</text>
<text x="589.7" y="947" text-anchor="middle">768</text>
<text x="674.7" y="947" text-anchor="middle">896</text>
<text x="758.7" y="947" text-anchor="middle">1024</text>
<text x="843.7" y="947" text-anchor="middle">1152</text>
<text x="928.7" y="947" text-anchor="middle">1280</text>
<text transform="translate(48,866.5) rotate(-90)" text-anchor="middle">Input noise (ENC) @ 2fC</text>
</svg>
</body></html>
